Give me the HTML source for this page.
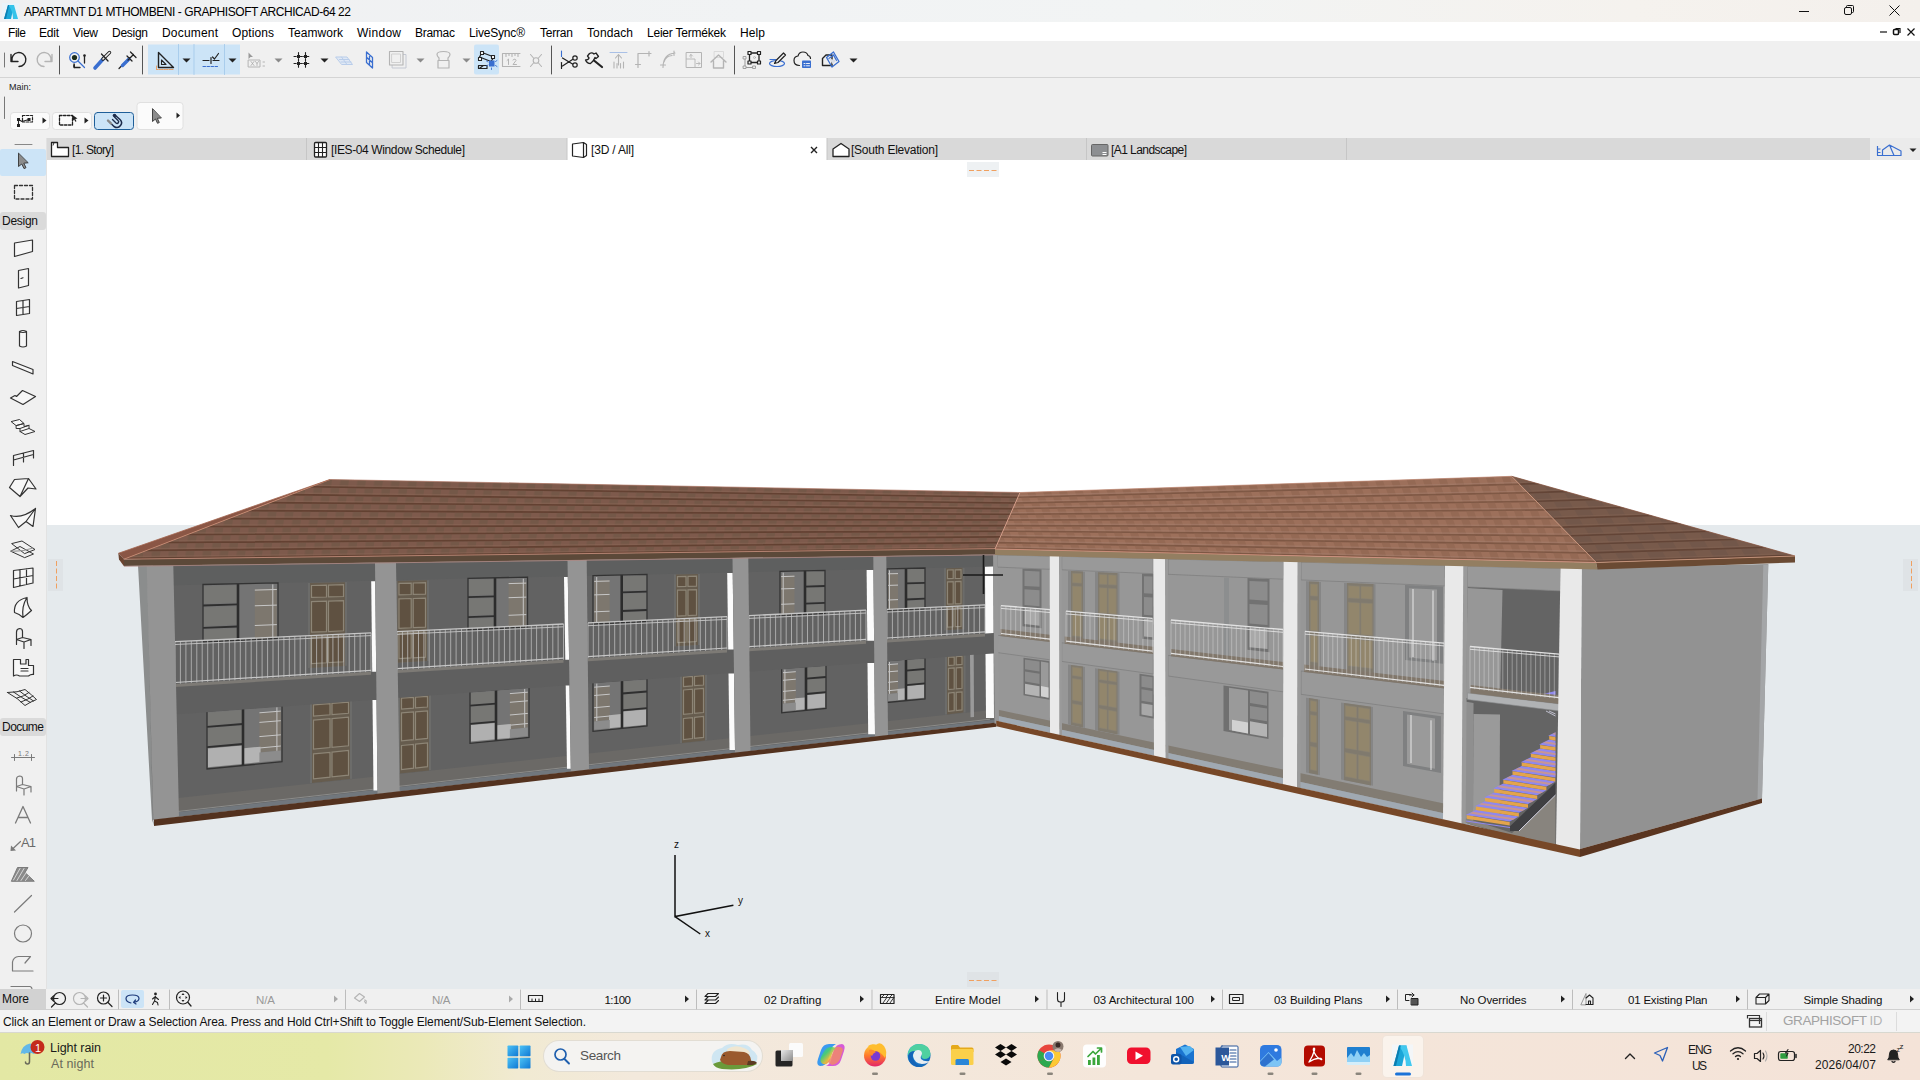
<!DOCTYPE html>
<html><head><meta charset="utf-8"><title>ARCHICAD</title>
<style>
html,body{margin:0;padding:0;background:#fff;}
body{width:1920px;height:1080px;position:relative;overflow:hidden;font-family:"Liberation Sans",sans-serif;}
.t{position:absolute;white-space:nowrap;}
.a{position:absolute;}
#titlebar{position:absolute;left:0;top:0;width:1920px;height:22px;background:linear-gradient(90deg,#eff0f2 0%,#f1f3f4 40%,#f2f4f4 60%,#f5f2ee 85%,#f4f0ec 100%);}
#menubar{position:absolute;left:0;top:22px;width:1920px;height:19px;background:#fff;}
#toolbar{position:absolute;left:0;top:41px;width:1920px;height:36px;background:#f0f0f0;border-bottom:1px solid #d4d4d4;}
#infobox{position:absolute;left:0;top:78px;width:1920px;height:60px;background:#f0f0f0;}
#tabbar{position:absolute;left:47px;top:138px;width:1873px;height:22px;background:#d9d9d9;}
#toolbox{position:absolute;left:0;top:138px;width:46px;height:851px;background:#f0f0f0;border-right:1px solid #e2e2e2;}
#quickbar{position:absolute;left:0;top:989px;width:1920px;height:20px;background:#f0f0f0;border-bottom:1px solid #d0d0d0;}
#statusbar{position:absolute;left:0;top:1010px;width:1920px;height:22px;background:#f3f3f3;}
#taskbar{position:absolute;left:0;top:1032px;width:1920px;height:48px;background:linear-gradient(90deg,#e3e8a4 0%,#e5e9a7 17%,#ebe9b8 22%,#f1ead2 27%,#f3e9dc 33%,#f4e6da 60%,#f4e3d8 100%);border-top:1px solid #d8d8d0;box-sizing:border-box;}
#view{position:absolute;left:47px;top:161px;width:1873px;height:828px;background:#fff;overflow:hidden;}
</style></head>
<body>
<div id="view"><svg width="1873" height="828" viewBox="47 161 1873 828" shape-rendering="auto">
<rect x="47" y="525" width="1873" height="470" fill="#e5eaed"/>
<polygon points="138,565.5 147,565.5 153.3,820 154,825.5 152,820" fill="#8b8d8d"/>
<polygon points="147,565.7 996,554.6 996,722.5 153,819.6" fill="#626262"/>
<polygon points="153,565.6 996,554.6 996,566.4 153,585.8" fill="#5e5f5f"/>
<polygon points="153,800.7 996,709.5 996,718.6 153,814.3" fill="#6b6966"/>
<line x1="160" y1="813.5" x2="990" y2="719.2" stroke="#8c8c8a" stroke-width="1"/>
<polygon points="153,815.1 996,719.4 996,722.5 153,819.6" fill="#71777d"/>
<polygon points="203,584.5 278,582.8 278,638.5 203,642" fill="#747474"/>
<polygon points="254.8,588.9 276.8,588.4 276.8,638.6 254.8,639.6" fill="#7d776e"/>
<path d="M254.8 590.1L276.8 589.5M254.8 605.8L276.8 605.1M254.8 625.5L276.8 624.6M272.8 584.4V638.8" stroke="#c6c6c6" stroke-width="1" fill="none"/>
<polygon points="204,586.2 237,585.4 237,602.4 204,603.4" fill="#777774"/>
<polygon points="204,607.5 237,606.4 237,624.6 204,625.9" fill="#777774"/>
<polygon points="204,629.9 237,628.5 237,640.4 204,642" fill="#777774"/>
<path d="M203 605.5L238 604.4M203 627.9L238 626.5" stroke="#2f2f2f" stroke-width="1.800" fill="none"/>
<line x1="238" y1="583.7" x2="238" y2="640.4" stroke="#2c2c2c" stroke-width="2.6"/>
<polygon points="203,584.5 278,582.8 278,638.5 203,642" fill="none" stroke="#333333" stroke-width="1.300"/>
<polygon points="308,583 347,582.1 347,665.8 308,668.1" fill="#6c6c6a"/>
<polygon points="310,583 345,582.2 345,665.9 310,668" fill="#665c4e"/>
<polygon points="311.5,585.5 326.5,585.1 326.5,597 311.5,597.4" fill="#5f5141" stroke="#8d8576" stroke-width="1.200"/>
<polygon points="311.5,601.7 326.5,601.2 326.5,631.6 311.5,632.2" fill="#5f5141" stroke="#8d8576" stroke-width="1.200"/>
<polygon points="311.5,637.3 326.5,636.6 326.5,662.8 311.5,663.7" fill="#5f5141" stroke="#8d8576" stroke-width="1.200"/>
<polygon points="328.5,585.1 343.5,584.7 343.5,596.5 328.5,596.9" fill="#5f5141" stroke="#8d8576" stroke-width="1.200"/>
<polygon points="328.5,601.1 343.5,600.7 343.5,630.8 328.5,631.5" fill="#5f5141" stroke="#8d8576" stroke-width="1.200"/>
<polygon points="328.5,636.5 343.5,635.8 343.5,661.8 328.5,662.7" fill="#5f5141" stroke="#8d8576" stroke-width="1.200"/>
<polygon points="207,711 282,705.4 282,761.7 207,769" fill="#747474"/>
<polygon points="259.4,712.8 280.8,711.1 280.8,750.5 259.4,752.5" fill="#7d776e"/>
<path d="M259.4 712.8L280.8 711.1M259.4 722.4L280.8 720.7M259.4 736.6L280.8 734.8M259.4 748L280.8 746M276.9 707.3V750.9" stroke="#c6c6c6" stroke-width="1" fill="none"/>
<polygon points="244,748.2 260.6,746.7 260.6,762.1 244,763.7" fill="#b4b4b4"/>
<polygon points="259.4,752.5 280.8,750.5 280.8,760.1 259.4,762.2" fill="#8c8c8c"/>
<polygon points="208,712.7 242,710.1 242,722.7 208,725.4" fill="#777774"/>
<polygon points="208,728.3 242,725.6 242,742.7 208,745.7" fill="#777774"/>
<polygon points="208,748.6 242,745.6 242,763.9 208,767.2" fill="#b0b0b0"/>
<path d="M207 726.9L243 724M207 747.2L243 744" stroke="#2f2f2f" stroke-width="1.800" fill="none"/>
<line x1="243" y1="708.3" x2="243" y2="765.5" stroke="#2c2c2c" stroke-width="2.6"/>
<polygon points="207,711 282,705.4 282,761.7 207,769" fill="none" stroke="#333333" stroke-width="1.300"/>
<polygon points="310,702.6 352,699.5 352,778.7 310,783.2" fill="#6c6c6a"/>
<polygon points="312,702.5 350,699.7 350,778.9 312,783" fill="#665c4e"/>
<polygon points="313.5,704.8 330,703.6 330,714.8 313.5,716.1" fill="#5f5141" stroke="#8d8576" stroke-width="1.200"/>
<polygon points="313.5,720.1 330,718.7 330,747.5 313.5,749" fill="#5f5141" stroke="#8d8576" stroke-width="1.200"/>
<polygon points="313.5,753.9 330,752.3 330,777.1 313.5,778.8" fill="#5f5141" stroke="#8d8576" stroke-width="1.200"/>
<polygon points="332,703.4 348.5,702.2 348.5,713.3 332,714.6" fill="#5f5141" stroke="#8d8576" stroke-width="1.200"/>
<polygon points="332,718.6 348.5,717.2 348.5,745.8 332,747.3" fill="#5f5141" stroke="#8d8576" stroke-width="1.200"/>
<polygon points="332,752.1 348.5,750.5 348.5,775.1 332,776.8" fill="#5f5141" stroke="#8d8576" stroke-width="1.200"/>
<polygon points="395.5,581 429,580.2 429,660.9 395.5,662.9" fill="#6c6c6a"/>
<polygon points="397.5,581 427,580.3 427,661.1 397.5,662.8" fill="#665c4e"/>
<polygon points="399,583.4 411.2,583.1 411.2,594.5 399,594.8" fill="#5f5141" stroke="#8d8576" stroke-width="1.200"/>
<polygon points="399,598.9 411.2,598.5 411.2,627.8 399,628.4" fill="#5f5141" stroke="#8d8576" stroke-width="1.200"/>
<polygon points="399,633.3 411.2,632.7 411.2,657.9 399,658.6" fill="#5f5141" stroke="#8d8576" stroke-width="1.200"/>
<polygon points="413.2,583 425.5,582.7 425.5,594.1 413.2,594.4" fill="#5f5141" stroke="#8d8576" stroke-width="1.200"/>
<polygon points="413.2,598.5 425.5,598.1 425.5,627.2 413.2,627.7" fill="#5f5141" stroke="#8d8576" stroke-width="1.200"/>
<polygon points="413.2,632.6 425.5,632.1 425.5,657.1 413.2,657.8" fill="#5f5141" stroke="#8d8576" stroke-width="1.200"/>
<polygon points="468,578.4 527.5,577.1 527.5,627 468,629.8" fill="#747474"/>
<polygon points="508.6,582.5 526.3,582.1 526.3,627.1 508.6,627.9" fill="#7d776e"/>
<path d="M508.6 583.6L526.3 583.1M508.6 597.7L526.3 597.1M508.6 615.3L526.3 614.6M523.3 578.7V627.2" stroke="#c6c6c6" stroke-width="1" fill="none"/>
<polygon points="469,580 494,579.4 494,594.6 469,595.3" fill="#777774"/>
<polygon points="469,598.9 494,598.1 494,614.4 469,615.4" fill="#777774"/>
<polygon points="469,618.9 494,617.9 494,628.6 469,629.7" fill="#777774"/>
<path d="M468 597.2L495 596.3M468 617.2L495 616.1" stroke="#2f2f2f" stroke-width="1.800" fill="none"/>
<line x1="495" y1="577.8" x2="495" y2="628.5" stroke="#2c2c2c" stroke-width="2.6"/>
<polygon points="468,578.4 527.5,577.1 527.5,627 468,629.8" fill="none" stroke="#333333" stroke-width="1.300"/>
<polygon points="398,696.1 431,693.7 431,770.1 398,773.7" fill="#6c6c6a"/>
<polygon points="400,696 429,693.9 429,770.4 400,773.5" fill="#665c4e"/>
<polygon points="401.5,698.2 413.5,697.3 413.5,708.1 401.5,709.1" fill="#5f5141" stroke="#8d8576" stroke-width="1.200"/>
<polygon points="401.5,712.9 413.5,711.9 413.5,739.7 401.5,740.8" fill="#5f5141" stroke="#8d8576" stroke-width="1.200"/>
<polygon points="401.5,745.5 413.5,744.3 413.5,768.2 401.5,769.5" fill="#5f5141" stroke="#8d8576" stroke-width="1.200"/>
<polygon points="415.5,697.2 427.5,696.3 427.5,707 415.5,707.9" fill="#5f5141" stroke="#8d8576" stroke-width="1.200"/>
<polygon points="415.5,711.8 427.5,710.8 427.5,738.4 415.5,739.5" fill="#5f5141" stroke="#8d8576" stroke-width="1.200"/>
<polygon points="415.5,744.1 427.5,743 427.5,766.7 415.5,768" fill="#5f5141" stroke="#8d8576" stroke-width="1.200"/>
<polygon points="470,691.5 529,687.1 529,737.5 470,743.3" fill="#747474"/>
<polygon points="509.9,693.6 527.8,692.2 527.8,727.6 509.9,729.2" fill="#7d776e"/>
<path d="M509.9 693.6L527.8 692.2M509.9 702.3L527.8 700.8M509.9 715L527.8 713.4M509.9 725.2L527.8 723.5M524.7 688.9V727.8" stroke="#c6c6c6" stroke-width="1" fill="none"/>
<polygon points="497,725.3 510.9,724 510.9,737.8 497,739.1" fill="#b4b4b4"/>
<polygon points="509.9,729.2 527.8,727.6 527.8,736.1 509.9,737.9" fill="#8c8c8c"/>
<polygon points="471,693 495,691.2 495,702.4 471,704.4" fill="#777774"/>
<polygon points="471,706.9 495,705 495,720.4 471,722.5" fill="#777774"/>
<polygon points="471,725.1 495,722.9 495,739.3 471,741.6" fill="#b0b0b0"/>
<path d="M470 705.7L496 703.6M470 723.9L496 721.6" stroke="#2f2f2f" stroke-width="1.800" fill="none"/>
<line x1="496" y1="689.6" x2="496" y2="740.8" stroke="#2c2c2c" stroke-width="2.6"/>
<polygon points="470,691.5 529,687.1 529,737.5 470,743.3" fill="none" stroke="#333333" stroke-width="1.300"/>
<polygon points="593,575.6 647,574.3 647,621.5 593,624" fill="#747474"/>
<polygon points="594.2,580.4 609.6,580 609.6,623.2 594.2,623.9" fill="#7d776e"/>
<path d="M594.2 581.4L609.6 581M594.2 594.9L609.6 594.4M594.2 611.8L609.6 611.2M596.7 577V623.8" stroke="#c6c6c6" stroke-width="1" fill="none"/>
<polygon points="622.7,576.3 646,575.8 646,589.9 622.7,590.7" fill="#777774"/>
<polygon points="622.7,594 646,593.2 646,608.3 622.7,609.3" fill="#777774"/>
<polygon points="622.7,612.6 646,611.6 646,621.6 622.7,622.6" fill="#777774"/>
<path d="M621.7 592.4L647 591.6M621.7 611L647 610" stroke="#2f2f2f" stroke-width="1.800" fill="none"/>
<line x1="621.7" y1="574.9" x2="621.7" y2="622.7" stroke="#2c2c2c" stroke-width="2.6"/>
<polygon points="593,575.6 647,574.3 647,621.5 593,624" fill="none" stroke="#333333" stroke-width="1.300"/>
<polygon points="674,574.5 700,573.9 700,644.9 674,646.4" fill="#6c6c6a"/>
<polygon points="676,574.5 698,574 698,645 676,646.3" fill="#665c4e"/>
<polygon points="677.5,576.6 686,576.4 686,586.4 677.5,586.6" fill="#5f5141" stroke="#8d8576" stroke-width="1.200"/>
<polygon points="677.5,590.2 686,590 686,615.7 677.5,616.1" fill="#5f5141" stroke="#8d8576" stroke-width="1.200"/>
<polygon points="677.5,620.4 686,620 686,642.1 677.5,642.6" fill="#5f5141" stroke="#8d8576" stroke-width="1.200"/>
<polygon points="688,576.3 696.5,576.1 696.5,586.1 688,586.3" fill="#5f5141" stroke="#8d8576" stroke-width="1.200"/>
<polygon points="688,589.9 696.5,589.6 696.5,615.2 688,615.6" fill="#5f5141" stroke="#8d8576" stroke-width="1.200"/>
<polygon points="688,619.9 696.5,619.5 696.5,641.5 688,642" fill="#5f5141" stroke="#8d8576" stroke-width="1.200"/>
<polygon points="593,682.4 647,678.3 647,726 593,731.3" fill="#747474"/>
<polygon points="594.2,687.2 609.8,686 609.8,719.9 594.2,721.4" fill="#7d776e"/>
<path d="M594.2 687.2L609.8 686M594.2 695.5L609.8 694.2M594.2 707.7L609.8 706.3M594.2 717.5L609.8 716M596.8 683.6V721.1" stroke="#c6c6c6" stroke-width="1" fill="none"/>
<polygon points="609,715.2 621,714.1 621,727.1 609,728.3" fill="#b4b4b4"/>
<polygon points="594.2,721.4 609.8,719.9 609.8,728.2 594.2,729.7" fill="#8c8c8c"/>
<polygon points="623,681.6 646,679.9 646,690.3 623,692.2" fill="#777774"/>
<polygon points="623,694.6 646,692.7 646,707 623,709.1" fill="#777774"/>
<polygon points="623,711.5 646,709.4 646,724.7 623,726.9" fill="#b0b0b0"/>
<path d="M622 693.5L647 691.5M622 710.4L647 708.1" stroke="#2f2f2f" stroke-width="1.800" fill="none"/>
<line x1="622" y1="680.2" x2="622" y2="728.4" stroke="#2c2c2c" stroke-width="2.6"/>
<polygon points="593,682.4 647,678.3 647,726 593,731.3" fill="none" stroke="#333333" stroke-width="1.300"/>
<polygon points="680,675.3 707,673.3 707,740.3 680,743.3" fill="#6c6c6a"/>
<polygon points="682,675.2 705,673.5 705,740.6 682,743" fill="#665c4e"/>
<polygon points="683.5,677.1 692.5,676.4 692.5,685.9 683.5,686.6" fill="#5f5141" stroke="#8d8576" stroke-width="1.200"/>
<polygon points="683.5,690 692.5,689.2 692.5,713.5 683.5,714.4" fill="#5f5141" stroke="#8d8576" stroke-width="1.200"/>
<polygon points="683.5,718.5 692.5,717.6 692.5,738.5 683.5,739.5" fill="#5f5141" stroke="#8d8576" stroke-width="1.200"/>
<polygon points="694.5,676.3 703.5,675.6 703.5,685 694.5,685.7" fill="#5f5141" stroke="#8d8576" stroke-width="1.200"/>
<polygon points="694.5,689.1 703.5,688.3 703.5,712.5 694.5,713.4" fill="#5f5141" stroke="#8d8576" stroke-width="1.200"/>
<polygon points="694.5,717.4 703.5,716.5 703.5,737.4 694.5,738.3" fill="#5f5141" stroke="#8d8576" stroke-width="1.200"/>
<polygon points="780,571.3 825,570.3 825,613.3 780,615.4" fill="#747474"/>
<polygon points="781.2,575.7 794.5,575.3 794.5,614.7 781.2,615.3" fill="#7d776e"/>
<path d="M781.2 576.6L794.5 576.2M781.2 588.9L794.5 588.5M781.2 604.3L794.5 603.8M783.2 572.7V615.2" stroke="#c6c6c6" stroke-width="1" fill="none"/>
<polygon points="806,572 824,571.6 824,584.5 806,585" fill="#777774"/>
<polygon points="806,588.1 824,587.5 824,601.3 806,602" fill="#777774"/>
<polygon points="806,605 824,604.3 824,613.3 806,614.2" fill="#777774"/>
<path d="M805 586.6L825 586M805 603.6L825 602.8" stroke="#2f2f2f" stroke-width="1.800" fill="none"/>
<line x1="805" y1="570.7" x2="805" y2="614.2" stroke="#2c2c2c" stroke-width="2.6"/>
<polygon points="780,571.3 825,570.3 825,613.3 780,615.4" fill="none" stroke="#333333" stroke-width="1.300"/>
<polygon points="781.7,668.4 826,665.1 826,708.5 781.7,712.8" fill="#747474"/>
<polygon points="782.9,672.7 795.8,671.7 795.8,702.6 782.9,703.8" fill="#7d776e"/>
<path d="M782.9 672.7L795.8 671.7M782.9 680.3L795.8 679.2M782.9 691.4L795.8 690.3M782.9 700.3L795.8 699.1M784.9 669.6V703.6" stroke="#c6c6c6" stroke-width="1" fill="none"/>
<polygon points="795.1,698.3 805,697.4 805,709.2 795.1,710.2" fill="#b4b4b4"/>
<polygon points="782.9,703.8 795.8,702.6 795.8,710.1 782.9,711.4" fill="#8c8c8c"/>
<polygon points="807,667.8 825,666.4 825,676 807,677.4" fill="#777774"/>
<polygon points="807,679.6 825,678.2 825,691.2 807,692.8" fill="#777774"/>
<polygon points="807,695 825,693.4 825,707.3 807,709" fill="#b0b0b0"/>
<path d="M806 678.6L826 677M806 694L826 692.2" stroke="#2f2f2f" stroke-width="1.800" fill="none"/>
<line x1="806" y1="666.5" x2="806" y2="710.5" stroke="#2c2c2c" stroke-width="2.6"/>
<polygon points="781.7,668.4 826,665.1 826,708.5 781.7,712.8" fill="none" stroke="#333333" stroke-width="1.300"/>
<polygon points="887,568.9 925,568 925,608.7 887,610.4" fill="#747474"/>
<polygon points="888.2,573 898,572.7 898,609.9 888.2,610.4" fill="#7d776e"/>
<path d="M888.2 573.8L898 573.6M888.2 585.4L898 585.1M888.2 600L898 599.6M889.5 570.3V610.3" stroke="#c6c6c6" stroke-width="1" fill="none"/>
<polygon points="907,569.6 924,569.2 924,581.4 907,582" fill="#777774"/>
<polygon points="907,584.8 924,584.3 924,597.3 907,598" fill="#777774"/>
<polygon points="907,600.9 924,600.2 924,608.7 907,609.5" fill="#777774"/>
<path d="M906 583.4L925 582.8M906 599.5L925 598.7" stroke="#2f2f2f" stroke-width="1.800" fill="none"/>
<line x1="906" y1="568.4" x2="906" y2="609.6" stroke="#2c2c2c" stroke-width="2.6"/>
<polygon points="887,568.9 925,568 925,608.7 887,610.4" fill="none" stroke="#333333" stroke-width="1.300"/>
<polygon points="944,568.2 964.5,567.8 964.5,629.2 944,630.4" fill="#6c6c6a"/>
<polygon points="946,568.2 962.5,567.8 962.5,629.3 946,630.3" fill="#665c4e"/>
<polygon points="947.5,570 953.2,569.9 953.2,578.5 947.5,578.7" fill="#5f5141" stroke="#8d8576" stroke-width="1.200"/>
<polygon points="947.5,581.8 953.2,581.6 953.2,603.9 947.5,604.2" fill="#5f5141" stroke="#8d8576" stroke-width="1.200"/>
<polygon points="947.5,607.9 953.2,607.6 953.2,626.8 947.5,627.1" fill="#5f5141" stroke="#8d8576" stroke-width="1.200"/>
<polygon points="955.2,569.8 961,569.7 961,578.3 955.2,578.5" fill="#5f5141" stroke="#8d8576" stroke-width="1.200"/>
<polygon points="955.2,581.6 961,581.4 961,603.6 955.2,603.8" fill="#5f5141" stroke="#8d8576" stroke-width="1.200"/>
<polygon points="955.2,607.5 961,607.3 961,626.4 955.2,626.7" fill="#5f5141" stroke="#8d8576" stroke-width="1.200"/>
<polygon points="887,660.5 925,657.7 925,698.8 887,702.5" fill="#747474"/>
<polygon points="888.2,664.6 898,663.9 898,693.1 888.2,694" fill="#7d776e"/>
<path d="M888.2 664.6L898 663.9M888.2 671.8L898 671M888.2 682.3L898 681.4M888.2 690.7L898 689.8M889.5 661.9V693.9" stroke="#c6c6c6" stroke-width="1" fill="none"/>
<polygon points="897.5,689 905,688.3 905,699.5 897.5,700.3" fill="#b4b4b4"/>
<polygon points="888.2,694 898,693.1 898,700.2 888.2,701.2" fill="#8c8c8c"/>
<polygon points="907,660.3 924,659 924,668.1 907,669.4" fill="#777774"/>
<polygon points="907,671.5 924,670.1 924,682.5 907,684" fill="#777774"/>
<polygon points="907,686.1 924,684.5 924,697.7 907,699.3" fill="#b0b0b0"/>
<path d="M906 670.6L925 669M906 685.1L925 683.4" stroke="#2f2f2f" stroke-width="1.800" fill="none"/>
<line x1="906" y1="659.1" x2="906" y2="700.7" stroke="#2c2c2c" stroke-width="2.6"/>
<polygon points="887,660.5 925,657.7 925,698.8 887,702.5" fill="none" stroke="#333333" stroke-width="1.300"/>
<polygon points="945,655.7 965.5,654.2 965.5,712.4 945,714.6" fill="#6c6c6a"/>
<polygon points="947,655.6 963.5,654.3 963.5,712.6 947,714.4" fill="#665c4e"/>
<polygon points="948.5,657.2 954.2,656.8 954.2,665 948.5,665.5" fill="#5f5141" stroke="#8d8576" stroke-width="1.200"/>
<polygon points="948.5,668.4 954.2,667.9 954.2,689 948.5,689.6" fill="#5f5141" stroke="#8d8576" stroke-width="1.200"/>
<polygon points="948.5,693.1 954.2,692.5 954.2,710.7 948.5,711.3" fill="#5f5141" stroke="#8d8576" stroke-width="1.200"/>
<polygon points="956.2,656.6 962,656.2 962,664.4 956.2,664.8" fill="#5f5141" stroke="#8d8576" stroke-width="1.200"/>
<polygon points="956.2,667.8 962,667.3 962,688.3 956.2,688.8" fill="#5f5141" stroke="#8d8576" stroke-width="1.200"/>
<polygon points="956.2,692.3 962,691.8 962,709.9 956.2,710.5" fill="#5f5141" stroke="#8d8576" stroke-width="1.200"/>
<polygon points="155,685.2 996,632.7 996,653.3 155,716.1" fill="#5f5f5f"/>
<polygon points="175,684 371,671.8 371,674.8 175,687" fill="#7d7a75"/>
<path d="M175 641.7V684M180.4 641.5V683.7M185.9 641.2V683.3M191.3 641V683M196.8 640.7V682.6M202.2 640.5V682.3M207.7 640.2V682M213.1 640V681.6M218.6 639.7V681.3M224 639.5V680.9M229.4 639.2V680.6M234.9 639V680.3M240.3 638.7V679.9M245.8 638.5V679.6M251.2 638.2V679.2M256.7 638V678.9M262.1 637.7V678.6M267.6 637.5V678.2M273 637.2V677.9M278.4 637V677.5M283.9 636.7V677.2M289.3 636.5V676.9M294.8 636.2V676.5M300.2 636V676.2M305.7 635.8V675.8M311.1 635.5V675.5M316.6 635.3V675.2M322 635V674.8M327.4 634.8V674.5M332.9 634.5V674.1M338.3 634.3V673.8M343.8 634V673.5M349.2 633.8V673.1M354.7 633.5V672.8M360.1 633.3V672.4M365.6 633V672.1M371 632.8V671.8" stroke="#c6c6c6" stroke-width="0.8" fill="none" opacity="0.9"/>
<line x1="175" y1="641.7" x2="371" y2="632.8" stroke="#c6c6c6" stroke-width="1.3"/>
<line x1="175" y1="644.5" x2="371" y2="635.6" stroke="#c6c6c6" stroke-width="0.9"/>
<line x1="175" y1="682.5" x2="371" y2="670.3" stroke="#c6c6c6" stroke-width="1.2"/>
<polygon points="397,670.1 563.5,659.7 563.5,662.7 397,673.1" fill="#7d7a75"/>
<path d="M397 631.6V670.1M402.4 631.4V669.8M407.7 631.1V669.5M413.1 630.9V669.1M418.5 630.6V668.8M423.9 630.4V668.5M429.2 630.1V668.1M434.6 629.9V667.8M440 629.6V667.5M445.3 629.4V667.1M450.7 629.2V666.8M456.1 628.9V666.4M461.5 628.7V666.1M466.8 628.4V665.8M472.2 628.2V665.4M477.6 627.9V665.1M482.9 627.7V664.8M488.3 627.4V664.4M493.7 627.2V664.1M499 627V663.8M504.4 626.7V663.4M509.8 626.5V663.1M515.2 626.2V662.8M520.5 626V662.4M525.9 625.7V662.1M531.3 625.5V661.8M536.6 625.2V661.4M542 625V661.1M547.4 624.8V660.7M552.8 624.5V660.4M558.1 624.3V660.1M563.5 624V659.7" stroke="#c6c6c6" stroke-width="0.8" fill="none" opacity="0.9"/>
<line x1="397" y1="631.6" x2="563.5" y2="624" stroke="#c6c6c6" stroke-width="1.3"/>
<line x1="397" y1="634.4" x2="563.5" y2="626.8" stroke="#c6c6c6" stroke-width="0.9"/>
<line x1="397" y1="668.6" x2="563.5" y2="658.2" stroke="#c6c6c6" stroke-width="1.2"/>
<polygon points="588,658.2 727,649.5 727,652.5 588,661.2" fill="#7d7a75"/>
<path d="M588 622.9V658.2M593.3 622.7V657.9M598.7 622.4V657.5M604 622.2V657.2M609.4 621.9V656.9M614.7 621.7V656.5M620.1 621.4V656.2M625.4 621.2V655.9M630.8 621V655.5M636.1 620.7V655.2M641.5 620.5V654.9M646.8 620.2V654.5M652.2 620V654.2M657.5 619.7V653.9M662.8 619.5V653.5M668.2 619.3V653.2M673.5 619V652.9M678.9 618.8V652.5M684.2 618.5V652.2M689.6 618.3V651.9M694.9 618V651.5M700.3 617.8V651.2M705.6 617.5V650.9M711 617.3V650.5M716.3 617.1V650.2M721.7 616.8V649.9M727 616.6V649.5" stroke="#c6c6c6" stroke-width="0.8" fill="none" opacity="0.9"/>
<line x1="588" y1="622.9" x2="727" y2="616.6" stroke="#c6c6c6" stroke-width="1.3"/>
<line x1="588" y1="625.7" x2="727" y2="619.4" stroke="#c6c6c6" stroke-width="0.9"/>
<line x1="588" y1="656.7" x2="727" y2="648" stroke="#c6c6c6" stroke-width="1.2"/>
<polygon points="749,648.2 866,640.8 866,643.8 749,651.2" fill="#7d7a75"/>
<path d="M749 615.6V648.2M754.3 615.3V647.8M759.6 615.1V647.5M765 614.8V647.2M770.3 614.6V646.8M775.6 614.4V646.5M780.9 614.1V646.2M786.2 613.9V645.8M791.5 613.6V645.5M796.9 613.4V645.2M802.2 613.2V644.8M807.5 612.9V644.5M812.8 612.7V644.2M818.1 612.4V643.8M823.5 612.2V643.5M828.8 611.9V643.2M834.1 611.7V642.8M839.4 611.5V642.5M844.7 611.2V642.2M850 611V641.8M855.4 610.7V641.5M860.7 610.5V641.2M866 610.2V640.8" stroke="#c6c6c6" stroke-width="0.8" fill="none" opacity="0.9"/>
<line x1="749" y1="615.6" x2="866" y2="610.2" stroke="#c6c6c6" stroke-width="1.3"/>
<line x1="749" y1="618.4" x2="866" y2="613" stroke="#c6c6c6" stroke-width="0.9"/>
<line x1="749" y1="646.7" x2="866" y2="639.3" stroke="#c6c6c6" stroke-width="1.2"/>
<polygon points="887,639.5 985,633.4 985,636.4 887,642.5" fill="#7d7a75"/>
<path d="M887 609.3V639.5M892.4 609V639.2M897.9 608.8V638.9M903.3 608.5V638.5M908.8 608.3V638.2M914.2 608.1V637.8M919.7 607.8V637.5M925.1 607.6V637.2M930.6 607.3V636.8M936 607.1V636.5M941.4 606.8V636.1M946.9 606.6V635.8M952.3 606.3V635.5M957.8 606.1V635.1M963.2 605.8V634.8M968.7 605.6V634.4M974.1 605.3V634.1M979.6 605.1V633.8M985 604.8V633.4" stroke="#c6c6c6" stroke-width="0.8" fill="none" opacity="0.9"/>
<line x1="887" y1="609.3" x2="985" y2="604.8" stroke="#c6c6c6" stroke-width="1.3"/>
<line x1="887" y1="612.1" x2="985" y2="607.6" stroke="#c6c6c6" stroke-width="0.9"/>
<line x1="887" y1="638" x2="985" y2="631.9" stroke="#c6c6c6" stroke-width="1.2"/>
<polygon points="146.7,565.5 173.3,565.5 179,816.9 153.3,819.9" fill="#949494"/>
<polygon points="371.2,581.3 375.2,581.3 376.2,671.8 372.2,671.8" fill="#fbfbfb"/>
<polygon points="372.5,700 376.5,700 377.5,790.6 373.5,790.6" fill="#fbfbfb"/>
<polygon points="375,562.6 396,562.6 399.7,791.5 377.5,794.1" fill="#949494"/>
<polygon points="564,576.9 567.8,576.9 569.1,659.7 565.3,659.7" fill="#fbfbfb"/>
<polygon points="565.7,685.6 569.5,685.6 570.8,768.7 567,768.7" fill="#fbfbfb"/>
<polygon points="567.5,560.1 586.7,560.1 589,769.7 570.8,771.8" fill="#949494"/>
<polygon points="727.2,573.1 732.7,573.1 733.7,649.5 728.2,649.5" fill="#fbfbfb"/>
<polygon points="728.5,673.4 734,673.4 735,750.1 729.5,750.1" fill="#fbfbfb"/>
<polygon points="732.5,557.9 748.3,557.9 750.5,751.1 735,752.9" fill="#949494"/>
<polygon points="866.6,569.9 873.4,569.9 874.1,640.8 867.3,640.8" fill="#fbfbfb"/>
<polygon points="867.5,663 874.3,663 875,734.3 868.2,734.3" fill="#fbfbfb"/>
<polygon points="873.3,556.1 886.3,556.1 888,735.3 875,736.8" fill="#949494"/>
<polygon points="985,566.7 993.3,566.5 993.6,632.9 985.3,633.4" fill="#fbfbfb"/>
<polygon points="985.5,654.1 993.6,653.5 994,718 986,718" fill="#fbfbfb"/>
<polygon points="970,655 973.7,654.8 974,717 970.5,717.3" fill="#9a9a9a"/>
<polygon points="154,819.5 996.3,722.5 996.3,726.7 154,826" fill="#53321f"/>
<polygon points="1581.7,568.5 1768.3,564 1762,798.5 1580,849" fill="#929292"/>
<polygon points="1763.3,564.6 1768.3,564.5 1762,798.5 1757.5,799.8" fill="#a4a6a8"/>
<polygon points="1580,849 1762,798.5 1762,803 1580,857" fill="#5a3520"/>
<polygon points="993.3,554.8 1561,568.4 1556,844.2 996,720.7" fill="#979797"/>
<polygon points="996,709.3 1470,808.9 1470,818.9 996,715.4" fill="#827c73"/>
<polygon points="996,715.4 1470,818.9 1470,825.2 996,720.7" fill="#a0a9b2"/>
<polygon points="1467.5,586 1561,591 1557,850 1463,822" fill="#646464"/>
<polygon points="1467.5,588 1502.5,590 1500,700 1466,698" fill="#979797"/>
<polygon points="1462,701 1473.5,703 1473,823 1461.5,822" fill="#8f8f8f"/>
<polygon points="1473.5,714 1500,714.5 1499.5,815 1473,815" fill="#9a9a9a"/>
<polygon points="1512,833 1555.5,795 1555.5,848 1463,822 1466,818" fill="#88847e"/>
<polygon points="1510,826.5 1509.7,826.6 1518.9,817.8 1518.9,817.8 1528,809 1528,809 1537.2,800.2 1537.2,800.2 1546.4,791.4 1546.4,791.4 1555.5,782.6 1555.5,782.6 1555.5,773.8 1555.5,786 1555.5,795 1519,831 1510,831" fill="#3f3f42"/>
<line x1="1519" y1="831" x2="1555.5" y2="795" stroke="#d4d4e4" stroke-width="1"/>
<clipPath id="cst"><rect x="1460" y="690" width="95.5" height="170"/></clipPath><g clip-path="url(#cst)">
<polygon points="1465.7,815 1509.7,821.6 1518.9,816.6 1475.9,810" fill="#9088ee"/>
<polygon points="1469.7,813.4 1512.7,820 1515.7,818.4 1472.7,811.8" fill="#d89a78" opacity="0.750"/>
<polygon points="1466.7,815.3 1509.7,821.9 1509.7,825.4 1466.7,818.8" fill="#e3a44c"/>
<polygon points="1474.9,806.2 1518.9,812.8 1528,807.8 1485,801.2" fill="#9088ee"/>
<polygon points="1478.9,804.6 1521.9,811.2 1524.9,809.6 1481.9,803" fill="#d89a78" opacity="0.750"/>
<polygon points="1475.9,806.5 1518.9,813.1 1518.9,816.6 1475.9,810" fill="#e3a44c"/>
<polygon points="1484,797.4 1528,804 1537.2,799 1494.2,792.4" fill="#9088ee"/>
<polygon points="1488,795.8 1531,802.4 1534,800.8 1491,794.2" fill="#d89a78" opacity="0.750"/>
<polygon points="1485,797.7 1528,804.3 1528,807.8 1485,801.2" fill="#e3a44c"/>
<polygon points="1493.2,788.6 1537.2,795.2 1546.4,790.2 1503.4,783.6" fill="#9088ee"/>
<polygon points="1497.2,787 1540.2,793.6 1543.2,792 1500.2,785.4" fill="#d89a78" opacity="0.750"/>
<polygon points="1494.2,788.9 1537.2,795.5 1537.2,799 1494.2,792.4" fill="#e3a44c"/>
<polygon points="1502.4,779.8 1546.4,786.4 1555.6,781.4 1512.6,774.8" fill="#9088ee"/>
<polygon points="1506.4,778.2 1549.4,784.8 1552.4,783.2 1509.4,776.6" fill="#d89a78" opacity="0.750"/>
<polygon points="1503.4,780.1 1546.4,786.7 1546.4,790.2 1503.4,783.6" fill="#e3a44c"/>
<polygon points="1511.5,771 1555.5,777.6 1564.7,772.6 1521.7,766" fill="#9088ee"/>
<polygon points="1515.5,769.4 1558.5,776 1561.5,774.4 1518.5,767.8" fill="#d89a78" opacity="0.750"/>
<polygon points="1512.5,771.3 1555.5,777.9 1555.5,781.4 1512.5,774.8" fill="#e3a44c"/>
<polygon points="1520.7,762.2 1564.7,768.8 1573.9,763.8 1530.9,757.2" fill="#9088ee"/>
<polygon points="1524.7,760.6 1567.7,767.2 1570.7,765.6 1527.7,759" fill="#d89a78" opacity="0.750"/>
<polygon points="1521.7,762.5 1564.7,769.1 1564.7,772.6 1521.7,766" fill="#e3a44c"/>
<polygon points="1529.9,753.4 1573.9,760 1583.1,755 1540.1,748.4" fill="#9088ee"/>
<polygon points="1533.9,751.8 1576.9,758.4 1579.9,756.8 1536.9,750.2" fill="#d89a78" opacity="0.750"/>
<polygon points="1530.9,753.7 1573.9,760.3 1573.9,763.8 1530.9,757.2" fill="#e3a44c"/>
<polygon points="1539.1,744.6 1583.1,751.2 1592.2,746.2 1549.2,739.6" fill="#9088ee"/>
<polygon points="1543.1,743 1586.1,749.6 1589.1,748 1546.1,741.4" fill="#d89a78" opacity="0.750"/>
<polygon points="1540.1,744.9 1583.1,751.5 1583.1,755 1540.1,748.4" fill="#e3a44c"/>
<polygon points="1548.2,735.8 1592.2,742.4 1601.4,737.4 1558.4,730.8" fill="#9088ee"/>
<polygon points="1552.2,734.2 1595.2,740.8 1598.2,739.2 1555.2,732.6" fill="#d89a78" opacity="0.750"/>
<polygon points="1549.2,736.1 1592.2,742.7 1592.2,746.2 1549.2,739.6" fill="#e3a44c"/>
</g>
<line x1="1466" y1="821" x2="1510" y2="827.5" stroke="#8f88ee" stroke-width="1.2"/>
<polygon points="1543,694 1555.5,691 1555.5,697.5 1546,699" fill="#8f88ee"/>
<line x1="1546" y1="711" x2="1555.5" y2="716" stroke="#c8c8d8" stroke-width="0.9"/>
<line x1="1549" y1="711" x2="1555.5" y2="714" stroke="#c8c8d8" stroke-width="0.9"/>
<polygon points="1022.5,568.4 1041.5,569.2 1041.5,628.2 1022.5,626.2" fill="#727272"/>
<polygon points="1024.5,570.8 1039.5,571.5 1039.5,586.8 1024.5,585.9" fill="#8c8c8c"/>
<polygon points="1024.5,589.3 1039.5,590.3 1039.5,606.2 1024.5,605" fill="#8c8c8c"/>
<polygon points="1024.5,608.5 1039.5,609.7 1039.5,625.7 1024.5,624.1" fill="#a8a8a8"/>
<polygon points="1023.5,657.7 1049.5,661.3 1049.5,699.8 1023.5,695.2" fill="#707070"/>
<polygon points="1041,661.6 1048.5,662.7 1048.5,697.7 1041,696.3" fill="#9a9a9a"/>
<polygon points="1041,686.1 1048.5,687.4 1048.5,697.7 1041,696.3" fill="#d2d2d2"/>
<polygon points="1025,659.4 1039.5,661.5 1039.5,671.4 1025,669.2" fill="#8c8c8c"/>
<polygon points="1025,671.4 1039.5,673.7 1039.5,683.9 1025,681.6" fill="#8c8c8c"/>
<polygon points="1025,683.8 1039.5,686.2 1039.5,696.5 1025,694" fill="#b4b4b4"/>
<polygon points="1068,571 1085,571.7 1085,640.5 1068,638.6" fill="#868686"/>
<polygon points="1071,571.1 1083,571.6 1083,640.2 1071,638.9" fill="#807a6e"/>
<polygon points="1072.5,573.2 1081.5,573.6 1081.5,583.2 1072.5,582.7" fill="#92866c" stroke="#8a8374" stroke-width="0.600"/>
<polygon points="1072.5,586.1 1081.5,586.6 1081.5,611.3 1072.5,610.5" fill="#92866c" stroke="#8a8374" stroke-width="0.600"/>
<polygon points="1072.5,614.6 1081.5,615.4 1081.5,636.6 1072.5,635.7" fill="#92866c" stroke="#8a8374" stroke-width="0.600"/>
<polygon points="1095,572.1 1119.5,573.2 1119.5,644.4 1095,641.6" fill="#868686"/>
<polygon points="1098,572.3 1117.5,573.1 1117.5,644.1 1098,641.9" fill="#807a6e"/>
<polygon points="1099.2,574.4 1107,574.7 1107,584.6 1099.2,584.2" fill="#92866c" stroke="#8a8374" stroke-width="0.600"/>
<polygon points="1099.2,587.7 1107,588.1 1107,613.4 1099.2,612.8" fill="#92866c" stroke="#8a8374" stroke-width="0.600"/>
<polygon points="1099.2,617 1107,617.6 1107,639.4 1099.2,638.6" fill="#92866c" stroke="#8a8374" stroke-width="0.600"/>
<polygon points="1108.5,574.8 1116.3,575.2 1116.3,585.1 1108.5,584.7" fill="#92866c" stroke="#8a8374" stroke-width="0.600"/>
<polygon points="1108.5,588.2 1116.3,588.7 1116.3,614.2 1108.5,613.5" fill="#92866c" stroke="#8a8374" stroke-width="0.600"/>
<polygon points="1108.5,617.8 1116.3,618.5 1116.3,640.5 1108.5,639.6" fill="#92866c" stroke="#8a8374" stroke-width="0.600"/>
<polygon points="1142,573.5 1154.5,574 1154.5,640.1 1142,638.8" fill="#727272"/>
<polygon points="1144,576.2 1152.5,576.5 1152.5,593.7 1144,593.2" fill="#8c8c8c"/>
<polygon points="1144,597.1 1152.5,597.6 1152.5,615.5 1144,614.8" fill="#8c8c8c"/>
<polygon points="1144,618.7 1152.5,619.4 1152.5,637.2 1144,636.4" fill="#a8a8a8"/>
<polygon points="1068,664.5 1085,666.9 1085,727.9 1068,724.5" fill="#868686"/>
<polygon points="1071,664.9 1083,666.6 1083,727.5 1071,725.1" fill="#807a6e"/>
<polygon points="1072.5,667 1081.5,668.2 1081.5,676.7 1072.5,675.4" fill="#92866c" stroke="#8a8374" stroke-width="0.600"/>
<polygon points="1072.5,678.4 1081.5,679.8 1081.5,701.7 1072.5,700.1" fill="#92866c" stroke="#8a8374" stroke-width="0.600"/>
<polygon points="1072.5,703.7 1081.5,705.3 1081.5,724.2 1072.5,722.4" fill="#92866c" stroke="#8a8374" stroke-width="0.600"/>
<polygon points="1095,668.3 1119.5,671.7 1119.5,734.8 1095,729.9" fill="#868686"/>
<polygon points="1098,668.7 1117.5,671.4 1117.5,734.4 1098,730.5" fill="#807a6e"/>
<polygon points="1099.2,670.7 1107,671.8 1107,680.6 1099.2,679.4" fill="#92866c" stroke="#8a8374" stroke-width="0.600"/>
<polygon points="1099.2,682.5 1107,683.7 1107,706.1 1099.2,704.8" fill="#92866c" stroke="#8a8374" stroke-width="0.600"/>
<polygon points="1099.2,708.5 1107,709.9 1107,729.2 1099.2,727.7" fill="#92866c" stroke="#8a8374" stroke-width="0.600"/>
<polygon points="1108.5,672 1116.3,673.1 1116.3,682 1108.5,680.8" fill="#92866c" stroke="#8a8374" stroke-width="0.600"/>
<polygon points="1108.5,683.9 1116.3,685.1 1116.3,707.8 1108.5,706.4" fill="#92866c" stroke="#8a8374" stroke-width="0.600"/>
<polygon points="1108.5,710.2 1116.3,711.5 1116.3,731.1 1108.5,729.5" fill="#92866c" stroke="#8a8374" stroke-width="0.600"/>
<polygon points="1139.5,673.8 1154.5,675.9 1154.5,718.7 1139.5,716" fill="#727272"/>
<polygon points="1141.5,675.8 1152.5,677.3 1152.5,688.4 1141.5,686.8" fill="#8c8c8c"/>
<polygon points="1141.5,689.3 1152.5,691 1152.5,702.5 1141.5,700.7" fill="#8c8c8c"/>
<polygon points="1141.5,703.2 1152.5,705.1 1152.5,716.6 1141.5,714.6" fill="#a8a8a8"/>
<polygon points="1224,577.7 1229,577.9 1229,656.7 1224,656.1" fill="#8c8e8f"/>
<polygon points="1247.5,577.9 1269.5,578.9 1269.5,652.2 1247.5,649.8" fill="#727272"/>
<polygon points="1249.5,580.9 1267.5,581.7 1267.5,600.7 1249.5,599.6" fill="#8c8c8c"/>
<polygon points="1249.5,604 1267.5,605.1 1267.5,624.9 1249.5,623.4" fill="#8c8c8c"/>
<polygon points="1249.5,627.7 1267.5,629.3 1267.5,649 1249.5,647.2" fill="#a8a8a8"/>
<polygon points="1223.5,685.5 1268.5,691.7 1268.5,739.1 1223.5,731" fill="#707070"/>
<polygon points="1229,687.7 1248,690.4 1248,733.4 1229,730" fill="#9a9a9a"/>
<polygon points="1232,719.7 1248,722.4 1248,733.4 1232,730.5" fill="#d2d2d2"/>
<polygon points="1250,691 1267,693.4 1267,705.7 1250,703.1" fill="#8c8c8c"/>
<polygon points="1250,705.9 1267,708.5 1267,721.3 1250,718.5" fill="#8c8c8c"/>
<polygon points="1250,721.3 1267,724.2 1267,736.9 1250,733.9" fill="#b4b4b4"/>
<polygon points="1306,581.2 1321,581.9 1321,667.1 1306,665.4" fill="#868686"/>
<polygon points="1309,581.4 1319,581.8 1319,666.8 1309,665.7" fill="#807a6e"/>
<polygon points="1310.5,584 1317.5,584.3 1317.5,596.2 1310.5,595.8" fill="#92866c" stroke="#8a8374" stroke-width="0.600"/>
<polygon points="1310.5,600 1317.5,600.4 1317.5,631 1310.5,630.4" fill="#92866c" stroke="#8a8374" stroke-width="0.600"/>
<polygon points="1310.5,635.5 1317.5,636.1 1317.5,662.4 1310.5,661.7" fill="#92866c" stroke="#8a8374" stroke-width="0.600"/>
<polygon points="1344,582.9 1375.5,584.2 1375.5,673.2 1344,669.7" fill="#868686"/>
<polygon points="1347,583 1373.5,584.1 1373.5,673 1347,670" fill="#807a6e"/>
<polygon points="1348.2,585.7 1359.5,586.2 1359.5,598.5 1348.2,597.9" fill="#92866c" stroke="#8a8374" stroke-width="0.600"/>
<polygon points="1348.2,602.2 1359.5,602.9 1359.5,634.5 1348.2,633.6" fill="#92866c" stroke="#8a8374" stroke-width="0.600"/>
<polygon points="1348.2,638.8 1359.5,639.8 1359.5,667 1348.2,665.8" fill="#92866c" stroke="#8a8374" stroke-width="0.600"/>
<polygon points="1361,586.2 1372.3,586.8 1372.3,599.2 1361,598.6" fill="#92866c" stroke="#8a8374" stroke-width="0.600"/>
<polygon points="1361,603 1372.3,603.6 1372.3,635.6 1361,634.6" fill="#92866c" stroke="#8a8374" stroke-width="0.600"/>
<polygon points="1361,639.9 1372.3,640.9 1372.3,668.4 1361,667.2" fill="#92866c" stroke="#8a8374" stroke-width="0.600"/>
<polygon points="1405,585 1443,586.6 1443,663.8 1405,660" fill="#7f8081"/>
<polygon points="1409,588.2 1437,589.4 1437,660.2 1409,657.4" fill="#9a9a9a"/>
<line x1="1413" y1="589" x2="1413" y2="657" stroke="#e8e8e8" stroke-width="1"/>
<line x1="1433" y1="590.6" x2="1433" y2="660.8" stroke="#e8e8e8" stroke-width="1"/>
<polygon points="1306,697.7 1320,699.7 1320,775.2 1306,772.4" fill="#868686"/>
<polygon points="1309,698.1 1318,699.4 1318,774.8 1309,773" fill="#807a6e"/>
<polygon points="1310.5,700.6 1316.5,701.4 1316.5,712 1310.5,711.1" fill="#92866c" stroke="#8a8374" stroke-width="0.600"/>
<polygon points="1310.5,714.8 1316.5,715.7 1316.5,742.8 1310.5,741.8" fill="#92866c" stroke="#8a8374" stroke-width="0.600"/>
<polygon points="1310.5,746.3 1316.5,747.4 1316.5,770.7 1310.5,769.5" fill="#92866c" stroke="#8a8374" stroke-width="0.600"/>
<polygon points="1341,702.6 1373,707 1373,785.8 1341,779.4" fill="#868686"/>
<polygon points="1344,703 1371,706.8 1371,785.4 1344,780" fill="#807a6e"/>
<polygon points="1345.2,705.5 1356.7,707.1 1356.7,718 1345.2,716.3" fill="#92866c" stroke="#8a8374" stroke-width="0.600"/>
<polygon points="1345.2,720.1 1356.7,721.9 1356.7,749.9 1345.2,747.9" fill="#92866c" stroke="#8a8374" stroke-width="0.600"/>
<polygon points="1345.2,752.5 1356.7,754.6 1356.7,778.7 1345.2,776.4" fill="#92866c" stroke="#8a8374" stroke-width="0.600"/>
<polygon points="1358.3,707.3 1369.8,709 1369.8,720 1358.3,718.2" fill="#92866c" stroke="#8a8374" stroke-width="0.600"/>
<polygon points="1358.3,722.1 1369.8,723.9 1369.8,752.2 1358.3,750.2" fill="#92866c" stroke="#8a8374" stroke-width="0.600"/>
<polygon points="1358.3,754.8 1369.8,756.9 1369.8,781.3 1358.3,779" fill="#92866c" stroke="#8a8374" stroke-width="0.600"/>
<polygon points="1403,711 1441,716.3 1441,772.9 1403,766" fill="#7f8081"/>
<polygon points="1407,714.6 1435,718.5 1435,768.8 1407,763.7" fill="#9a9a9a"/>
<line x1="1411" y1="715" x2="1411" y2="763" stroke="#e8e8e8" stroke-width="1"/>
<line x1="1431" y1="720.3" x2="1431" y2="769.9" stroke="#e8e8e8" stroke-width="1"/>
<polygon points="997.5,554.9 1050,556.1 1050,569.3 997.5,567.1" fill="#999999" stroke="#7d7d7d" stroke-width="0.700"/>
<polygon points="997.5,635.3 1050,641.4 1050,659.8 997.5,652.6" fill="#999999" stroke="#7d7d7d" stroke-width="0.700"/>
<polygon points="1000.5,628.9 1050,634.7 1050,641.9 1000.5,636.1" fill="#81776b"/>
<polygon points="1061.7,556.4 1153.3,558.6 1153.3,573.7 1061.7,569.8" fill="#999999" stroke="#7d7d7d" stroke-width="0.700"/>
<polygon points="1061.7,642.8 1153.3,653.6 1153.3,674 1061.7,661.4" fill="#999999" stroke="#7d7d7d" stroke-width="0.700"/>
<polygon points="1064.7,636.4 1153.3,646.8 1153.3,654.1 1064.7,643.7" fill="#81776b"/>
<polygon points="1168,559 1283.5,561.7 1283.5,579.2 1168,574.3" fill="#999999" stroke="#7d7d7d" stroke-width="0.700"/>
<polygon points="1168,655.4 1283.5,669 1283.5,691.9 1168,676" fill="#999999" stroke="#7d7d7d" stroke-width="0.700"/>
<polygon points="1171,648.9 1283.5,662 1283.5,669.5 1171,656.2" fill="#81776b"/>
<polygon points="1301,562.2 1445,565.6 1445,586 1301,579.9" fill="#999999" stroke="#7d7d7d" stroke-width="0.700"/>
<polygon points="1301,671 1445,688 1445,714 1301,694.3" fill="#999999" stroke="#7d7d7d" stroke-width="0.700"/>
<polygon points="1304,664.4 1445,680.9 1445,688.5 1304,671.9" fill="#81776b"/>
<polygon points="1467.5,566.2 1560.5,568.4 1560.5,590.9 1467.5,587" fill="#999999" stroke="#7d7d7d" stroke-width="0.700"/>
<polygon points="1467.5,692.9 1560.5,704.1 1560.5,711.1 1467.5,699.5" fill="#b0b2b4" stroke="#8b8d8f" stroke-width="0.600"/>
<polygon points="1470.5,685.1 1560.5,695.3 1560.5,704.1 1470.5,693.3" fill="#81776b"/>
<path d="M1001 605.6V635M1005.9 606V635.5M1010.8 606.4V636.1M1015.7 606.8V636.7M1020.6 607.3V637.2M1025.5 607.7V637.8M1030.4 608.1V638.4M1035.3 608.5V639M1040.2 608.9V639.5M1045.1 609.3V640.1M1050 609.7V640.7" stroke="#e2e2e2" stroke-width="0.7" fill="none" opacity="0.6"/>
<line x1="1001" y1="605.6" x2="1050" y2="609.7" stroke="#e2e2e2" stroke-width="1.3"/>
<line x1="1001" y1="608.4" x2="1050" y2="612.5" stroke="#e2e2e2" stroke-width="0.9"/>
<line x1="1001" y1="633.5" x2="1050" y2="639.2" stroke="#e2e2e2" stroke-width="1.2"/>
<path d="M1066 611.1V642.6M1070.8 611.5V643.1M1075.6 611.9V643.7M1080.4 612.3V644.3M1085.2 612.7V644.8M1090 613.1V645.4M1094.8 613.5V645.9M1099.6 613.9V646.5M1104.4 614.3V647.1M1109.2 614.8V647.6M1114.1 615.2V648.2M1118.9 615.6V648.8M1123.7 616V649.3M1128.5 616.4V649.9M1133.3 616.8V650.4M1138.1 617.2V651M1142.9 617.6V651.6M1147.7 618V652.1M1152.5 618.4V652.7" stroke="#e2e2e2" stroke-width="0.7" fill="none" opacity="0.6"/>
<line x1="1066" y1="611.1" x2="1152.5" y2="618.4" stroke="#e2e2e2" stroke-width="1.3"/>
<line x1="1066" y1="613.9" x2="1152.5" y2="621.2" stroke="#e2e2e2" stroke-width="0.9"/>
<line x1="1066" y1="641.1" x2="1152.5" y2="651.2" stroke="#e2e2e2" stroke-width="1.2"/>
<path d="M1171 620V654.9M1175.7 620.4V655.4M1180.3 620.8V655.9M1185 621.2V656.5M1189.7 621.6V657M1194.3 622V657.6M1199 622.3V658.1M1203.7 622.7V658.7M1208.3 623.1V659.2M1213 623.5V659.8M1217.7 623.9V660.3M1222.3 624.3V660.9M1227 624.7V661.4M1231.7 625.1V662M1236.3 625.5V662.5M1241 625.9V663.1M1245.7 626.3V663.6M1250.3 626.7V664.1M1255 627.1V664.7M1259.7 627.5V665.2M1264.3 627.9V665.8M1269 628.3V666.3M1273.7 628.7V666.9M1278.3 629.1V667.4M1283 629.5V668" stroke="#e2e2e2" stroke-width="0.7" fill="none" opacity="0.6"/>
<line x1="1171" y1="620" x2="1283" y2="629.5" stroke="#e2e2e2" stroke-width="1.3"/>
<line x1="1171" y1="622.8" x2="1283" y2="632.3" stroke="#e2e2e2" stroke-width="0.9"/>
<line x1="1171" y1="653.4" x2="1283" y2="666.5" stroke="#e2e2e2" stroke-width="1.2"/>
<path d="M1305 631.3V670.5M1309.6 631.7V671.1M1314.3 632.1V671.6M1318.9 632.5V672.2M1323.5 632.9V672.7M1328.2 633.3V673.3M1332.8 633.7V673.8M1337.4 634.1V674.3M1342.1 634.5V674.9M1346.7 634.8V675.4M1351.3 635.2V676M1356 635.6V676.5M1360.6 636V677.1M1365.2 636.4V677.6M1369.9 636.8V678.1M1374.5 637.2V678.7M1379.1 637.6V679.2M1383.8 638V679.8M1388.4 638.4V680.3M1393 638.8V680.9M1397.7 639.2V681.4M1402.3 639.6V681.9M1406.9 639.9V682.5M1411.6 640.3V683M1416.2 640.7V683.6M1420.8 641.1V684.1M1425.5 641.5V684.6M1430.1 641.9V685.2M1434.7 642.3V685.7M1439.4 642.7V686.3M1444 643.1V686.8" stroke="#e2e2e2" stroke-width="0.7" fill="none" opacity="0.6"/>
<line x1="1305" y1="631.3" x2="1444" y2="643.1" stroke="#e2e2e2" stroke-width="1.3"/>
<line x1="1305" y1="634.1" x2="1444" y2="645.9" stroke="#e2e2e2" stroke-width="0.9"/>
<line x1="1305" y1="669" x2="1444" y2="685.3" stroke="#e2e2e2" stroke-width="1.2"/>
<path d="M1470 646.5V688.8M1474.7 646.9V689.3M1479.4 647.3V689.9M1484.1 647.7V690.4M1488.7 648.1V690.9M1493.4 648.5V691.5M1498.1 648.9V692M1502.8 649.3V692.6M1507.5 649.7V693.1M1512.2 650.1V693.7M1516.8 650.5V694.2M1521.5 650.9V694.8M1526.2 651.3V695.3M1530.9 651.7V695.8M1535.6 652.1V696.4M1540.3 652.5V696.9M1544.9 652.9V697.5M1549.6 653.3V698M1554.3 653.7V698.6M1559 654.1V699.1" stroke="#e2e2e2" stroke-width="0.7" fill="none" opacity="0.6"/>
<line x1="1470" y1="646.5" x2="1559" y2="654.1" stroke="#e2e2e2" stroke-width="1.3"/>
<line x1="1470" y1="649.3" x2="1559" y2="656.9" stroke="#e2e2e2" stroke-width="0.9"/>
<line x1="1470" y1="687.3" x2="1559" y2="697.6" stroke="#e2e2e2" stroke-width="1.2"/>
<polygon points="993.3,554.8 997.5,554.9 999,724 994.5,723.5" fill="#989898"/>
<polygon points="1059,555.7 1061.7,556 1062,735.6 1059.3,735" fill="#9a9a9a"/>
<polygon points="1049.7,555.7 1059,555.7 1059.3,735 1050,732.9" fill="#e9e9e9"/>
<polygon points="1165,558.3 1168,558.6 1168.5,759.1 1165.5,758.4" fill="#9a9a9a"/>
<polygon points="1153.3,558.3 1165,558.3 1165.5,758.4 1154,755.9" fill="#e9e9e9"/>
<polygon points="1297.5,561.4 1301,561.7 1300.5,788.2 1297,787.4" fill="#9a9a9a"/>
<polygon points="1283.5,561.4 1297.5,561.4 1297,787.4 1283,784.3" fill="#e9e9e9"/>
<polygon points="1463.3,565.4 1467.5,565.7 1465.7,824.6 1461.5,823.7" fill="#9a9a9a"/>
<polygon points="1445,565.4 1463.3,565.4 1461.5,823.7 1443,819.6" fill="#e9e9e9"/>
<polygon points="1560.5,568.2 1581.7,568.2 1580,849.8 1556,844.5" fill="#e9e9e9"/>
<polygon points="996.3,720.8 1580,849.5 1580,857 996.3,726.3" fill="#774828"/>
<defs><pattern id="pl0" width="17" height="8" patternUnits="userSpaceOnUse" patternTransform="translate(0 0) skewX(-8)"><rect width="17" height="8" fill="#7e5a4c"/><rect x="8.5" width="8.5" height="8" fill="#745848"/></pattern><pattern id="pl1" width="17" height="8" patternUnits="userSpaceOnUse" patternTransform="translate(8.5 0) skewX(-8)"><rect width="17" height="8" fill="#7e5a4c"/><rect x="8.5" width="8.5" height="8" fill="#745848"/></pattern><pattern id="pr0" width="16" height="8" patternUnits="userSpaceOnUse" patternTransform="translate(0 0) skewX(20)"><rect width="16" height="8" fill="#9d705b"/><rect x="8" width="8" height="8" fill="#946954"/></pattern><pattern id="pr1" width="16" height="8" patternUnits="userSpaceOnUse" patternTransform="translate(8 0) skewX(20)"><rect width="16" height="8" fill="#9d705b"/><rect x="8" width="8" height="8" fill="#946954"/></pattern><pattern id="ph0" width="32" height="8" patternUnits="userSpaceOnUse" patternTransform="translate(0 0) skewX(30)"><rect width="32" height="8" fill="#785a4b"/><rect x="16" width="16" height="8" fill="#72574a"/></pattern><pattern id="ph1" width="32" height="8" patternUnits="userSpaceOnUse" patternTransform="translate(16 0) skewX(30)"><rect width="32" height="8" fill="#785a4b"/><rect x="16" width="16" height="8" fill="#72574a"/></pattern></defs>
<polygon points="124,559.2 330,479.5 1020,492.5 995,549" fill="#7a5a4b"/>
<clipPath id="cpl"><polygon points="124,559.2 330,479.5 1020,492.5 995,549"/></clipPath><g clip-path="url(#cpl)">
<polygon points="124,559.2 995,549 997.5,543.4 144.6,551.2" fill="url(#pl0)"/>
<polygon points="144.6,551.2 997.5,543.4 1000,537.7 165.2,543.3" fill="url(#pl1)"/>
<polygon points="165.2,543.3 1000,537.7 1002.5,532 185.8,535.3" fill="url(#pl0)"/>
<polygon points="185.8,535.3 1002.5,532 1005,526.4 206.4,527.3" fill="url(#pl1)"/>
<polygon points="206.4,527.3 1005,526.4 1007.5,520.8 227,519.4" fill="url(#pl0)"/>
<polygon points="227,519.4 1007.5,520.8 1010,515.1 247.6,511.4" fill="url(#pl1)"/>
<polygon points="247.6,511.4 1010,515.1 1012.5,509.4 268.2,503.4" fill="url(#pl0)"/>
<polygon points="268.2,503.4 1012.5,509.4 1015,503.8 288.8,495.4" fill="url(#pl1)"/>
<polygon points="288.8,495.4 1015,503.8 1017.5,498.1 309.4,487.5" fill="url(#pl0)"/>
<polygon points="309.4,487.5 1017.5,498.1 1020,492.5 330,479.5" fill="url(#pl1)"/>
<path d="M124 558.4L995 548.2M144.6 550.4L997.5 542.6M165.2 542.5L1000 536.9M185.8 534.5L1002.5 531.2M206.4 526.5L1005 525.6M227 518.6L1007.5 520M247.6 510.6L1010 514.3M268.2 502.6L1012.5 508.6M288.8 494.6L1015 503M309.4 486.7L1017.5 497.3" stroke="#5f3d2e" stroke-width="1.600" fill="none" opacity="0.850"/>
<path d="M124 556.8L995 546.6M144.6 548.8L997.5 541M165.2 540.9L1000 535.3M185.8 532.9L1002.5 529.6M206.4 524.9L1005 524M227 517L1007.5 518.4M247.6 509L1010 512.7M268.2 501L1012.5 507.1M288.8 493L1015 501.4M309.4 485.1L1017.5 495.8" stroke="#8a6555" stroke-width="1.400" fill="none" opacity="0.500"/>
</g>
<polygon points="118.3,553.3 330,479.5 124,559.2" fill="#8a5645"/>
<line x1="124" y1="559.2" x2="330" y2="479.5" stroke="#c58a72" stroke-width="0.9"/>
<line x1="118.3" y1="553.3" x2="330" y2="479.5" stroke="#a56752" stroke-width="0.8"/>
<polygon points="118.3,553.3 124,559.2 124,566.3 119,559.5" fill="#6a4431"/>
<polygon points="124,559.2 995,548.6 995,554.6 124,566" fill="#5c4939"/>
<line x1="124" y1="559.2" x2="995" y2="548.6" stroke="#c08a78" stroke-width="0.9"/>
<line x1="124" y1="566.3" x2="995" y2="554.9" stroke="#b08a86" stroke-width="0.9" opacity="0.900"/>
<polygon points="1020,492.5 1511.7,476.3 1596,562.3 995,549" fill="#986c57"/>
<clipPath id="cpr"><polygon points="995,549 1020,492.5 1511.7,476.3 1596,562.3"/></clipPath><g clip-path="url(#cpr)">
<polygon points="995,549 1596,562.3 1587.6,553.7 997.5,543.4" fill="url(#pr0)"/>
<polygon points="997.5,543.4 1587.6,553.7 1579.1,545.1 1000,537.7" fill="url(#pr1)"/>
<polygon points="1000,537.7 1579.1,545.1 1570.7,536.5 1002.5,532" fill="url(#pr0)"/>
<polygon points="1002.5,532 1570.7,536.5 1562.3,527.9 1005,526.4" fill="url(#pr1)"/>
<polygon points="1005,526.4 1562.3,527.9 1553.8,519.3 1007.5,520.8" fill="url(#pr0)"/>
<polygon points="1007.5,520.8 1553.8,519.3 1545.4,510.7 1010,515.1" fill="url(#pr1)"/>
<polygon points="1010,515.1 1545.4,510.7 1537,502.1 1012.5,509.4" fill="url(#pr0)"/>
<polygon points="1012.5,509.4 1537,502.1 1528.6,493.5 1015,503.8" fill="url(#pr1)"/>
<polygon points="1015,503.8 1528.6,493.5 1520.1,484.9 1017.5,498.1" fill="url(#pr0)"/>
<polygon points="1017.5,498.1 1520.1,484.9 1511.7,476.3 1020,492.5" fill="url(#pr1)"/>
<path d="M995 548.2L1596 561.5M997.5 542.6L1587.6 552.9M1000 536.9L1579.1 544.3M1002.5 531.2L1570.7 535.7M1005 525.6L1562.3 527.1M1007.5 520L1553.8 518.5M1010 514.3L1545.4 509.9M1012.5 508.6L1537 501.3M1015 503L1528.6 492.7M1017.5 497.3L1520.1 484.1" stroke="#7a5542" stroke-width="1.600" fill="none" opacity="0.850"/>
<path d="M995 546.6L1596 559.9M997.5 541L1587.6 551.3M1000 535.3L1579.1 542.7M1002.5 529.6L1570.7 534.1M1005 524L1562.3 525.5M1007.5 518.4L1553.8 516.9M1010 512.7L1545.4 508.3M1012.5 507.1L1537 499.7M1015 501.4L1528.6 491.1M1017.5 495.8L1520.1 482.5" stroke="#a58070" stroke-width="1.400" fill="none" opacity="0.500"/>
</g>
<polygon points="1511.7,476.3 1795,556 1596,562.3" fill="#76594a"/>
<clipPath id="cph"><polygon points="1596,562.3 1511.7,476.3 1511.7,476.3 1795,556"/></clipPath><g clip-path="url(#cph)">
<polygon points="1596,562.3 1795,556 1766.7,548 1587.6,553.7" fill="url(#ph0)"/>
<polygon points="1587.6,553.7 1766.7,548 1738.3,540.1 1579.1,545.1" fill="url(#ph1)"/>
<polygon points="1579.1,545.1 1738.3,540.1 1710,532.1 1570.7,536.5" fill="url(#ph0)"/>
<polygon points="1570.7,536.5 1710,532.1 1681.7,524.1 1562.3,527.9" fill="url(#ph1)"/>
<polygon points="1562.3,527.9 1681.7,524.1 1653.3,516.1 1553.8,519.3" fill="url(#ph0)"/>
<polygon points="1553.8,519.3 1653.3,516.1 1625,508.2 1545.4,510.7" fill="url(#ph1)"/>
<polygon points="1545.4,510.7 1625,508.2 1596.7,500.2 1537,502.1" fill="url(#ph0)"/>
<polygon points="1537,502.1 1596.7,500.2 1568.4,492.2 1528.6,493.5" fill="url(#ph1)"/>
<polygon points="1528.6,493.5 1568.4,492.2 1540,484.3 1520.1,484.9" fill="url(#ph0)"/>
<polygon points="1520.1,484.9 1540,484.3 1511.7,476.3 1511.7,476.3" fill="url(#ph1)"/>
<path d="M1596 561.5L1795 555.2M1587.6 552.9L1766.7 547.2M1579.1 544.3L1738.3 539.3M1570.7 535.7L1710 531.3M1562.3 527.1L1681.7 523.3M1553.8 518.5L1653.3 515.4M1545.4 509.9L1625 507.4M1537 501.3L1596.7 499.4M1528.6 492.7L1568.4 491.4M1520.1 484.1L1540 483.5" stroke="#5f4132" stroke-width="1.600" fill="none" opacity="0.850"/>
<path d="M1596 559.9L1795 553.6M1587.6 551.3L1766.7 545.6M1579.1 542.7L1738.3 537.7M1570.7 534.1L1710 529.7M1562.3 525.5L1681.7 521.7M1553.8 516.9L1653.3 513.8M1545.4 508.3L1625 505.8M1537 499.7L1596.7 497.8M1528.6 491.1L1568.4 489.8M1520.1 482.5L1540 481.9" stroke="#836454" stroke-width="1.400" fill="none" opacity="0.500"/>
</g>
<line x1="1511.7" y1="476.3" x2="1596" y2="562.3" stroke="#d09a80" stroke-width="0.9"/>
<line x1="1511.7" y1="476.3" x2="1795" y2="556" stroke="#8a5a48" stroke-width="0.8"/>
<line x1="1020" y1="492.5" x2="995" y2="549" stroke="#d9a08c" stroke-width="0.9"/>
<line x1="330" y1="479.5" x2="1020" y2="492.5" stroke="#b07a68" stroke-width="0.7"/>
<line x1="1020" y1="492.5" x2="1511.7" y2="476.3" stroke="#c08a76" stroke-width="0.7"/>
<polygon points="995,549 1596,562.5 1597.5,569.5 995,555" fill="#937e61"/>
<line x1="995" y1="549" x2="1596" y2="562.5" stroke="#cf8f7c" stroke-width="0.9"/>
<polygon points="1596,562.5 1795,556 1795,562.5 1597.5,569.5" fill="#6a4a33"/>
<line x1="1596" y1="562.5" x2="1795" y2="556" stroke="#c9957c" stroke-width="0.9"/>
<line x1="983.5" y1="555" x2="983.5" y2="594" stroke="#1a1a1a" stroke-width="1.6"/>
<line x1="963" y1="575" x2="1003" y2="575" stroke="#1a1a1a" stroke-width="1.6"/>
<g stroke="#111" stroke-width="1.500" fill="none" stroke-linecap="butt"><path d="M675 855 V916.600 L733.400 905.300 M675 916.600 L700.300 934"/></g>
<g font-family="Liberation Sans, sans-serif" font-size="10" fill="#111"><text x="674" y="848">z</text><text x="738" y="904">y</text><text x="705" y="937">x</text></g>
<rect x="967" y="162" width="32" height="15" fill="#eef1f3"/><line x1="969" y1="170.500" x2="997" y2="170.500" stroke="#f0a060" stroke-width="1" stroke-dasharray="5 2.500"/>
<rect x="967" y="972" width="32" height="15" fill="#dfe3e6"/><line x1="969" y1="980.500" x2="997" y2="980.500" stroke="#f0a060" stroke-width="1" stroke-dasharray="5 2.500"/>
<rect x="48" y="559" width="15" height="32" fill="#dfe3e6"/><line x1="56.500" y1="561" x2="56.500" y2="589" stroke="#f0a060" stroke-width="1" stroke-dasharray="5 2.500"/>
<rect x="1903" y="559" width="15" height="32" fill="#dfe3e6"/><line x1="1911.500" y1="561" x2="1911.500" y2="589" stroke="#f0a060" stroke-width="1" stroke-dasharray="5 2.500"/>
</svg></div>
<div id="titlebar"></div>
<svg class="a" style="left:2px;top:3px" width="18" height="17" viewBox="0 0 18 17"><rect x="0" y="0" width="17" height="17" fill="#eaf3f9"/><path d="M2 16 L6 2 L12 2 L9 16 Z" fill="#1aa7d8"/><path d="M6 2 L12 2 L16 16 L11 16 C11 10 9 5 6 2Z" fill="#35c3ea"/><path d="M2 16 L6 2 L7.2 2 L4 16Z" fill="#0b7fb3"/></svg>
<span class="t" style="left:24px;top:4px;font-size:12px;line-height:16px;color:#000;letter-spacing:-0.434px;">APARTMNT D1 MTHOMBENI - GRAPHISOFT ARCHICAD-64 22</span>
<svg class="a" style="left:1780px;top:0" width="140" height="22" viewBox="0 0 140 22" fill="none" stroke="#111" stroke-width="1"><path d="M19 11.5 H29"/><rect x="64.500" y="7.500" width="7" height="7" rx="1.500"/><path d="M66.500 7.500 V6.500 Q66.500 5.500 67.500 5.500 H72.500 Q73.500 5.500 73.500 6.500 V11.500 Q73.500 12.500 72.500 12.500 H71.500"/><path d="M109.500 5.500 L119.500 15.500 M119.500 5.500 L109.500 15.500"/></svg>
<div id="menubar"></div>
<span class="t" style="left:8px;top:25px;font-size:12px;line-height:16px;color:#000;letter-spacing:-0.445px;">File</span>
<span class="t" style="left:39px;top:25px;font-size:12px;line-height:16px;color:#000;letter-spacing:-0.226px;">Edit</span>
<span class="t" style="left:73px;top:25px;font-size:12px;line-height:16px;color:#000;letter-spacing:-0.264px;">View</span>
<span class="t" style="left:112px;top:25px;font-size:12px;line-height:16px;color:#000;letter-spacing:-0.270px;">Design</span>
<span class="t" style="left:162px;top:25px;font-size:12px;line-height:16px;color:#000;letter-spacing:0.187px;">Document</span>
<span class="t" style="left:232px;top:25px;font-size:12px;line-height:16px;color:#000;letter-spacing:0.108px;">Options</span>
<span class="t" style="left:288px;top:25px;font-size:12px;line-height:16px;color:#000;letter-spacing:0.046px;">Teamwork</span>
<span class="t" style="left:357px;top:25px;font-size:12px;line-height:16px;color:#000;letter-spacing:0.264px;">Window</span>
<span class="t" style="left:415px;top:25px;font-size:12px;line-height:16px;color:#000;letter-spacing:-0.269px;">Bramac</span>
<span class="t" style="left:469px;top:25px;font-size:12px;line-height:16px;color:#000;letter-spacing:-0.192px;">LiveSync®</span>
<span class="t" style="left:540px;top:25px;font-size:12px;line-height:16px;color:#000;letter-spacing:-0.203px;">Terran</span>
<span class="t" style="left:587px;top:25px;font-size:12px;line-height:16px;color:#000;letter-spacing:0.105px;">Tondach</span>
<span class="t" style="left:647px;top:25px;font-size:12px;line-height:16px;color:#000;letter-spacing:-0.216px;">Leier Termékek</span>
<span class="t" style="left:740px;top:25px;font-size:12px;line-height:16px;color:#000;letter-spacing:0.107px;">Help</span>
<svg class="a" style="left:1876px;top:25px" width="44" height="14" viewBox="0 0 44 14" fill="none" stroke="#111" stroke-width="1.200"><path d="M4 7 H11"/><rect x="17.500" y="4.500" width="5" height="5" rx="1" stroke-width="1.500"/><path d="M19.500 3.500 H24 V8" stroke-width="1.200"/><path d="M31.500 3.500 L38.500 10.500 M38.500 3.500 L31.500 10.500"/></svg>
<div id="toolbar"></div>
<svg class="a" style="left:0;top:41px" width="960" height="37" viewBox="0 41 960 37" fill="none" stroke-linecap="round" stroke-linejoin="round">
<rect x="148" y="44.500" width="92" height="30" fill="#cce4f7"/>
<path d="M178.500 44.500 V74.500 M194 44.500 V74.500 M224.500 44.500 V74.500" stroke="#a9cdec" stroke-width="1"/>
<rect x="474" y="44.500" width="25" height="30" rx="2" fill="#cce4f7"/>
<path d="M4.500 53 V67" stroke="#777" stroke-width="1"/>
<path d="M59.500 46 V74 M142.500 46 V74 M551.500 46 V74 M734.500 46 V74" stroke="#555" stroke-width="1"/>
<path d="M12 61 A7 7 0 1 1 19 66.500 M11 54.500 V61.500 H18" stroke="#222" stroke-width="1.400"/>
<path d="M51 61 A7 7 0 1 0 44 66.500 M52 54.500 V61.500 H45" stroke="#b4b4b4" stroke-width="1.400"/>
<circle cx="74.500" cy="57.500" r="4.800" stroke="#3a6fd0" stroke-width="1.200"/><circle cx="74.500" cy="57.500" r="2.600" fill="#1d2d1d" stroke="none"/>
<path d="M78 61 L84.500 67.500" stroke="#3a6fd0" stroke-width="1.200"/>
<path d="M84.500 56 V63 M74 64 V67.500 H80" stroke="#222" stroke-width="1.300"/><circle cx="84.500" cy="55.500" r="1.300" fill="#222"/><path d="M73 66 L75 68.500 L75 63.500Z" fill="#222" stroke="none"/>
<path d="M95 68 L104 58" stroke="#3a6fd0" stroke-width="3.600"/>
<path d="M103 59 L109.500 52.500" stroke="#222" stroke-width="3.400"/><path d="M103 59 L109.500 52.500" stroke="#f0f0f0" stroke-width="1.600"/><path d="M101.500 54 L108 61" stroke="#222" stroke-width="1.300"/>
<path d="M119 68.500 L122.500 65" stroke="#222" stroke-width="1.200"/><path d="M122.500 65.500 L129 59" stroke="#3a6fd0" stroke-width="3.400"/><path d="M128 60 L133.500 54.500 M130.500 52 L136 57.500 M127 56 L132 61" stroke="#222" stroke-width="1.300"/>
<path d="M158.500 52.500 V67.500 H173.500 Z" stroke="#222" stroke-width="1.400"/><path d="M161.500 60 V64.500 H166 Z" stroke="#222" stroke-width="1.100"/><path d="M156.500 69.500 H174" stroke="#e9a36b" stroke-width="1" stroke-dasharray="1.500 1"/><path d="M156.500 66 V69.500" stroke="#e9a36b" stroke-width="1"/>
<path d="M182.500 58.500 H190.500 L186.500 62.500Z" fill="#222" stroke="none"/>
<path d="M203 60.500 H209 M213 60.500 H219 M211 57.500 V63.500 M212.500 57 L214.500 59 L218.500 53.500" stroke="#222" stroke-width="1.200"/><path d="M203 66.500 H219" stroke="#3a6fd0" stroke-width="1.100" stroke-dasharray="2.500 1.500"/>
<path d="M228.500 58.500 H236.500 L232.500 62.500Z" fill="#222" stroke="none"/>
<path d="M248.500 52.500 L253 57 L250.500 57 L248.500 59 Z" fill="#999" stroke="none"/><rect x="248.500" y="60" width="11.500" height="7" stroke="#b4b4b4" stroke-width="1"/><path d="M263 62 H264.500 M263 66 H264.500" stroke="#b4b4b4" stroke-width="1"/>
<path d="M251 61.500 L254 65.500 M254 61.500 L251 65.500 M255.500 61.500 L257 63.500 L258.500 61.500 M257 63.500 V65.500" stroke="#aaa" stroke-width="0.800"/>
<path d="M274.500 58.500 H282.500 L278.500 62.500Z" fill="#8a8a8a" stroke="none"/>
<path d="M294 56.500 H310 M294 63.500 H310 M298.500 52.500 V68 M305.500 52.500 V68" stroke="#222" stroke-width="1.100" stroke-dasharray="2 1.200"/>
<g fill="#222" stroke="none"><rect x="297" y="55" width="3" height="3"/><rect x="304" y="55" width="3" height="3"/><rect x="297" y="62" width="3" height="3"/><rect x="304" y="62" width="3" height="3"/></g>
<path d="M320.500 58.500 H328.500 L324.500 62.500Z" fill="#222" stroke="none"/>
<path d="M336 57 L347 57 L352.500 64.500 L342 64.500 Z M339.500 59.500 H349 M341 62 H351 M341.500 57 L347 64.500" stroke="#b9cdea" stroke-width="1" fill="#dfe8f5"/>
<path d="M366.500 52 L372.500 57.500 V68 L366.500 62.500 Z M369.500 54.700 V65.300 M366.500 57.200 L372.500 62.800" stroke="#3a6fd0" stroke-width="1.300"/>
<rect x="392.500" y="54.500" width="13.500" height="13.500" stroke="#c4c8d2" stroke-width="1"/><rect x="389.500" y="51.500" width="13.500" height="13.500" stroke="#b4b4b4" stroke-width="1.100" fill="#f0f0f0"/><rect x="392" y="54" width="8.500" height="8.500" stroke="#d0d0d0" stroke-width="1"/>
<path d="M416.500 58.500 H424.500 L420.500 62.500Z" fill="#8a8a8a" stroke="none"/>
<path d="M439 60.500 V58 Q437 56 437 54.500 Q437 51.500 443.500 51.500 Q450 51.500 450 54.500 Q450 56 448 58 V60.500 M438 60.500 H449 V68 H438 Z" stroke="#b4b4b4" stroke-width="1.200"/>
<path d="M462.500 58.500 H470.500 L466.500 62.500Z" fill="#8a8a8a" stroke="none"/>
<path d="M479.500 57 L482 52.500 L494 57 L491 61.500 Z" stroke="#222" stroke-width="1.200"/><g fill="#fff" stroke="#222" stroke-width="1.100"><rect x="480.500" y="51.500" width="3" height="3"/><rect x="491.500" y="55.500" width="3" height="3"/><rect x="478.500" y="57.500" width="3" height="3"/></g>
<path d="M478.500 65.500 H487 V68.500 H478.500 Z M480 68 L483 65.800" stroke="#222" stroke-width="1.200"/><rect x="489" y="60.500" width="5.500" height="6" fill="#3a6fd0" stroke="none"/><path d="M486.500 61 L488 62 M486.500 66 L488 65 M495.500 61.500 L497 60.500 M495.500 65.500 L497 66.500 M491.500 68 V69.500" stroke="#3a6fd0" stroke-width="0.900"/>
<path d="M502.500 53.500 H520 M502.500 53.500 V66.500 H520 M506 54 V56.500 M509 54 V55.500 M512 54 V56.500 M515 54 V55.500 M518 54 V56.500" stroke="#b4b4b4" stroke-width="1.100"/><path d="M507 60.500 L508.500 59 V64.500 M513 60 Q515.500 58 516 60.500 L513 64.500 H516.500" stroke="#b4b4b4" stroke-width="1"/>
<circle cx="536" cy="60.500" r="2.800" stroke="#b4b4b4" stroke-width="1.100"/><path d="M530.500 54.500 L533.500 58 M541.500 54.500 L538.500 58 M530.500 66.500 L533.500 63 M541.500 66.500 L538.500 63" stroke="#b4b4b4" stroke-width="1.100"/>
<path d="M561.500 51 V56.500" stroke="#3a6fd0" stroke-width="1.100"/><path d="M561.500 62.500 V68.500" stroke="#222" stroke-width="1.200"/><path d="M562.500 58 L572.500 64 M562.500 66 L572.500 59.500" stroke="#222" stroke-width="1.300"/><circle cx="575" cy="58" r="2.200" stroke="#222" stroke-width="1.200"/><circle cx="575" cy="65" r="2.200" stroke="#222" stroke-width="1.200"/>
<path d="M594 60.500 L602 67" stroke="#222" stroke-width="2.200"/><path d="M589.500 53.500 Q592 52 594 54 L596 53 L598.500 56.500 L596 58.500 L595 57.500 Q594 61 590.500 63.500 Q587 63.500 585.500 60 Q588.500 60 589 58 L587.500 56 Z" stroke="#222" stroke-width="1.300"/>
<path d="M610 52.500 H627" stroke="#a9c0e6" stroke-width="1"/><path d="M618.500 55 V65 M615.500 58 L618.500 54.500 L621.500 58 M614 62 V68 M617 63.500 V68 M620.500 63.500 V68 M623.500 62 V68" stroke="#b4b4b4" stroke-width="1.100"/>
<path d="M638 67.500 V53.500 H651 M649 51.500 V56 M635.500 64.500 H640.500" stroke="#b4b4b4" stroke-width="1.200"/>
<path d="M663 67.500 Q663 54 675 53 M674 51 V55.500 M660.500 65 H665.500 M664 62 Q666 56 672 55.500" stroke="#b4b4b4" stroke-width="1.100"/>
<rect x="686.500" y="52.500" width="15" height="15" stroke="#b4b4b4" stroke-width="1"/><path d="M686.500 59 H695 V67.500 M691 57.500 V54.500 M689.500 56 L691 54.500 L692.500 56 M696.500 63.500 H700 M698.500 62 L700 63.500 L698.500 65" stroke="#b4b4b4" stroke-width="0.900"/>
<rect x="714.500" y="51.500" width="9" height="6" stroke="#d4d4d4" stroke-width="0.800"/><path d="M711 62 L718.500 55 L726 62 M713.500 60.500 V68 H723.500 V60.500" stroke="#b4b4b4" stroke-width="1.400"/>
<path d="M745 58.500 V67.500 H754" stroke="#999" stroke-width="1"/><g fill="#f0f0f0" stroke="#999" stroke-width="0.900"><rect x="743.500" y="56.500" width="2.500" height="2.500"/><rect x="743.500" y="66" width="2.500" height="2.500"/><rect x="753" y="66" width="2.500" height="2.500"/></g>
<rect x="749.500" y="53" width="9.500" height="9.500" stroke="#222" stroke-width="1.300"/><g fill="#f0f0f0" stroke="#222" stroke-width="1.200"><rect x="748" y="51.500" width="3" height="3"/><rect x="757.500" y="51.500" width="3" height="3"/><rect x="748" y="61" width="3" height="3"/><rect x="757.500" y="61" width="3" height="3"/></g><circle cx="754.500" cy="57.500" r="1" stroke="#aaa" stroke-width="0.700"/>
<ellipse cx="777" cy="63.500" rx="7.500" ry="3" stroke="#3a6fd0" stroke-width="1.200"/><path d="M770 59.500 H776" stroke="#3a6fd0" stroke-width="1.100"/><path d="M774.500 63.500 L776 60.500 L783.500 53 L785.500 55 L778 62.500 Z" stroke="#222" stroke-width="1.200" fill="#f0f0f0"/>
<path d="M799.500 65.500 Q794 65.500 794 60.500 Q794 56.500 798 56 Q799 52 803 52 Q807 52 808 55.500 Q810.500 56 810.500 58.500" stroke="#222" stroke-width="1.200"/><rect x="802" y="60.500" width="9" height="7.500" rx="0.800" fill="#3a6fd0" stroke="none"/><path d="M804 63.500 H805 M806.500 63.500 H809.500 M804 65.800 H805 M806.500 65.800 H809.500" stroke="#fff" stroke-width="0.900"/>
<path d="M822.500 58.500 L826 55 H832 V65.500 H822.500 Z" stroke="#222" stroke-width="1.400"/><path d="M826.500 57.500 L833.500 52 L839 61.500 L832 67 Z M829 58.500 L833.500 55 L836.500 60.500" stroke="#3a6fd0" stroke-width="1.300"/><path d="M829 58.500 L836.500 60.500 L832.500 64 Z" fill="#d9dde6" stroke="none"/>
<path d="M849.500 58.500 H857.500 L853.500 62.500Z" fill="#222" stroke="none"/>
</svg>
<div id="infobox"></div>
<span class="t" style="left:9px;top:81px;font-size:9px;line-height:13px;color:#222;letter-spacing:-0.002px;">Main:</span>
<svg class="a" style="left:0;top:78px" width="240" height="60" viewBox="0 78 240 60" fill="none" stroke-linecap="round" stroke-linejoin="round">
<path d="M4.500 97 V118.500" stroke="#777" stroke-width="1"/>
<rect x="10.5" y="112.5" width="39" height="17" rx="3" fill="#fbfbfb" stroke="#e0e0e0" stroke-width="1"/>
<rect x="52.5" y="112.5" width="39" height="17" rx="3" fill="#fbfbfb" stroke="#e0e0e0" stroke-width="1"/>
<rect x="94.5" y="112.5" width="39" height="17" rx="3" fill="#cce4f7" stroke="#1f5f99" stroke-width="1"/>
<rect x="137" y="102.5" width="46" height="27" rx="3" fill="#fbfbfb" stroke="#e0e0e0" stroke-width="1"/>
<rect x="22.500" y="115.500" width="10" height="6.500" stroke="#222" stroke-width="1.200" stroke-dasharray="2.500 1.500"/><path d="M18.500 125.500 V119.500 L22 121.500 L29 119.500" stroke="#222" stroke-width="1.100"/><g fill="#222" stroke="none"><rect x="17" y="118" width="3" height="3"/><rect x="17" y="124" width="3" height="3"/><rect x="27.500" y="118" width="3" height="3"/></g>
<path d="M42.500 117.500 L46.500 120.500 L42.500 123.500Z" fill="#222" stroke="none"/>
<rect x="59.500" y="115.500" width="13" height="9.500" stroke="#222" stroke-width="1.300" stroke-dasharray="2.500 1.500"/><path d="M72.500 115 L77.500 118.500 L75.300 118.900 L76.500 121.300 L75.300 121.800 L74.200 119.500 L72.500 121 Z" fill="#222" stroke="none"/>
<path d="M84.500 117.500 L88.500 120.500 L84.500 123.500Z" fill="#222" stroke="none"/>
<path d="M109.500 122 L114 126.500 Q118 129 120.500 125.500 Q123 122.500 120 119.500 L115.500 115.500" stroke="#1d2b4a" stroke-width="1.500"/><path d="M112.500 119.500 L116 123 Q117.300 124 118.300 122.800 Q119.300 121.600 118 120.500 L114.500 117" stroke="#1d2b4a" stroke-width="1.400"/><circle cx="114.500" cy="115.500" r="1.800" fill="#1d2b4a" stroke="none"/><path d="M108 120.500 L111 123.500" stroke="#8a8a8a" stroke-width="2.400"/>
<path d="M152.500 109 V121.500 L155.500 119 L157.500 123.300 L159.300 122.500 L157.300 118.300 L161 118 Z" fill="#8c8c8c" stroke="#333" stroke-width="0.900"/>
<path d="M176.500 112.500 L180 115.500 L176.500 118.500Z" fill="#222" stroke="none"/>
</svg>
<div id="tabbar"></div>
<div class="a" style="left:567px;top:138px;width:260px;height:23px;background:#fff"></div>
<div class="a" style="left:1870px;top:138px;width:50px;height:22px;background:#ebebeb"></div>
<svg class="a" style="left:47px;top:138px" width="1873" height="23" viewBox="47 138 1873 23" fill="none" stroke-linejoin="round">
<path d="M306.500 138 V160 M567 138 V160 M827 138 V160 M1086.500 138 V160 M1346.500 138 V160" stroke="#c6c6c6" stroke-width="1"/>
<path d="M51.500 142.500 H57.500 V147.500 H68.500 V156.500 H51.500 Z" stroke="#222" stroke-width="1.300" fill="#fff"/><path d="M54 142.500 L53 145.500" stroke="#222" stroke-width="0.900"/>
<rect x="314.500" y="142.500" width="12" height="14.500" rx="1" stroke="#222" stroke-width="1.300" fill="#fff"/><path d="M318.500 142.500 V157 M322.500 142.500 V157 M314.500 147.500 H326.500 M314.500 152.500 H326.500" stroke="#222" stroke-width="1.100"/>
<path d="M572.500 144 L583.500 142.500 V157.500 L572.500 156 Z M583.500 142.500 L586.500 144.500 V155.500 L583.500 157.500" stroke="#222" stroke-width="1.200" fill="#fff"/>
<path d="M811 147 L817 153 M817 147 L811 153" stroke="#222" stroke-width="1.400"/>
<path d="M833 156.500 V149 L841 143.500 L849 149 V156.500 Z" stroke="#222" stroke-width="1.300" fill="#fff"/>
<rect x="1091.500" y="144.500" width="16.500" height="11.500" rx="1" fill="#8d8f92" stroke="#666" stroke-width="1"/><path d="M1102.500 152.500 H1106.500 M1102.500 154.500 H1106.500" stroke="#fff" stroke-width="1"/>
<path d="M1877.500 146 V155.500 H1882 M1877.500 149 H1880.500 M1877.500 152.500 H1880.500" stroke="#3a6fd0" stroke-width="1.200"/><path d="M1882.500 155.500 V150 L1889.500 145 L1901 151 V155.500 Z M1889.500 145 L1894 155.500" stroke="#3a6fd0" stroke-width="1.200"/>
<path d="M1909.500 148.500 H1916.500 L1913 152Z" fill="#222"/>
</svg>
<span class="t" style="left:72px;top:142px;font-size:12px;line-height:16px;color:#111;letter-spacing:-0.669px;">[1. Story]</span>
<span class="t" style="left:331px;top:142px;font-size:12px;line-height:16px;color:#111;letter-spacing:-0.380px;">[IES-04 Window Schedule]</span>
<span class="t" style="left:591px;top:142px;font-size:12px;line-height:16px;color:#111;letter-spacing:-0.187px;">[3D / All]</span>
<span class="t" style="left:851px;top:142px;font-size:12px;line-height:16px;color:#111;letter-spacing:-0.233px;">[South Elevation]</span>
<span class="t" style="left:1111px;top:142px;font-size:12px;line-height:16px;color:#111;letter-spacing:-0.569px;">[A1 Landscape]</span>
<div id="toolbox"></div>
<div class="a" style="left:0;top:149px;width:46px;height:27px;background:#cce4f7;border-radius:2px"></div>
<div class="a" style="left:0;top:212px;width:46px;height:18px;background:#dadada;border-radius:3px"></div>
<div class="a" style="left:0;top:718px;width:46px;height:18px;background:#dadada;border-radius:3px"></div>
<span class="t" style="left:2px;top:213px;font-size:12px;line-height:16px;color:#111;letter-spacing:-0.270px;">Design</span>
<span class="t" style="left:2px;top:719px;font-size:12px;line-height:16px;color:#111;letter-spacing:-0.537px;">Docume</span>
<svg class="a" style="left:0;top:138px" width="46" height="851" viewBox="0 138 46 851" fill="none" stroke="#333" stroke-width="1.200" stroke-linejoin="round" stroke-linecap="round">
<path d="M15 144.500 H32" stroke="#888" stroke-width="1"/>
<path d="M18.500 153.500 V166.500 L21.800 164 L24 168.600 L26 167.700 L23.800 163.200 L27.800 162.800 Z" fill="#8c8c8c" stroke="#333" stroke-width="0.900"/>
<rect x="14.500" y="185.500" width="18" height="13.500" stroke-dasharray="3 2" stroke-width="1.300"/>
<path d="M14.500 243 L32.500 240 V251.500 L14.500 256.500 Z" fill="#f7f7f7"/>
<path d="M18.500 270.500 L28.500 268.500 V285.500 L18.500 288 Z" fill="#f7f7f7"/><path d="M21 278.500 L23 277.800"/>
<path d="M16.500 301.500 L29.500 299.500 V313.500 L16.500 315.500 Z M23 300.500 V314.500 M16.500 308.500 L29.500 306.500" fill="#f7f7f7"/>
<path d="M19.500 331.500 V346 Q23 348 26.500 346 V331.500 Q23 329.500 19.500 331.500 Q23 333.500 26.500 331.500" fill="#f7f7f7"/>
<path d="M12.500 361.500 L33 369.500 V374 L29.500 372.500 L12.500 365.500 Z M33 369.500 L33 374" fill="#f7f7f7"/>
<path d="M10.500 398 L15 395.500 L16.500 396.500 L22.500 390.500 L35.500 396.500 L23 404.500 Z" fill="#f7f7f7"/>
<path d="M11.500 421.500 L19.500 419.500 L24 423.500 L16.500 425.500 Z M16.500 425.500 L24 423.500 L24 426.500 L29 425.300 L29 428.500 L35 431.500 L25 434.500 L20 431.500 L20 428.500 L16.500 428.500 Z M20 428.500 L29 425.300 M20 431.500 L29 428.500" fill="#f7f7f7" stroke-width="1"/>
<path d="M13.500 465.500 V455.500 L33.500 450.500 V458 M13.500 460 L33.500 454.500 M23.500 453 V462"/>
<path d="M9.500 487.500 L14.500 479.500 L28.500 478.500 L36 489 L28 488 L20 496.500 Z M28.500 478.500 L20 496.500" fill="#f7f7f7"/>
<path d="M10.500 515.500 Q22 519 35.500 508.500 L33 526.500 L26 521.500 L18.500 527.500 Z M26 521.500 L35.500 508.500" fill="#f7f7f7"/>
<path d="M12 543.500 L22 541 L35 549.500 L25 553.500 Z M11 551 L20 546.500 L33.500 554 L25 557.500 Z" stroke-width="1"/><path d="M11 551 Q22 552 33 548" stroke="#999"/>
<path d="M13.500 570.500 L33 568 V583 L13.500 587.500 Z M20 569.700 V586 M26.500 568.900 V584.500 M13.500 579 L33 575.500" fill="#f7f7f7"/>
<path d="M14.500 612.500 Q13.500 600.500 27 597.500 Q27 606.500 31.500 610.500 Q26.500 615 23 617.500 Q19.500 614 14.500 612.500 Z M27 597.500 Q21.500 606 23 617.500" fill="#f7f7f7"/>
<path d="M16.500 644.500 V632 Q16.500 629 19.500 628.500 Q22.500 628.500 22.500 631.500 V637.500 L31 639.500 L24 642 L16.500 639.500 M22.500 637.500 L16.500 639.500 M24 642 V648.500 M31 639.500 V645.500 M16.500 639.500 V644.500"/>
<path d="M13.500 659.500 H20.500 V664 H26 V659.500 H28.500 V665.500 H33.500 V674.500 Q31 674 28.500 676 H19.500 Q16.500 674 13.500 676 Z M21 668.500 H28 M21 671 H28" fill="#f7f7f7"/>
<path d="M7.500 692.500 Q18 692.500 25 689.500 Q32.500 695.500 36.500 699.500 Q30 702 25 705.500 Q18.500 698.500 7.500 692.500 Z M13.500 692 Q21 697.500 30.500 702.500 M19.500 691 Q25.500 696 33.500 701 M17 698 Q24 696.500 29 692.500 M21 702 Q28 699.500 33 696" stroke-width="1"/>
<g stroke="#7a7a7a"><path d="M11.500 757.500 H34.500 M14.500 754.500 V760.500 M31.500 754.500 V760.500" stroke-width="1"/></g>
<path d="M16.500 791 V779 Q16.500 776.500 19.500 776 Q22.500 776 22.500 778.500 V784.500 L31 786.500 L24 789 L16.500 786.500 M22.500 784.500 L16.500 786.500 M24 789 V795 M31 786.500 V792" stroke="#7a7a7a"/>
<path d="M15.500 823 L23 806.500 L30.500 823 M18 817.500 H28" stroke="#7a7a7a" stroke-width="1.300"/>
<path d="M20.500 841.500 L12 849.500" stroke="#7a7a7a"/><path d="M10.500 851 L11 845.500 L16 850.500 Z" fill="#7a7a7a" stroke="none"/>
<path d="M11.500 881 L17.500 867.500 H28 L25 872.500 L34 881 Z" fill="#8a8a8a" stroke="#7a7a7a" stroke-width="1"/><path d="M13.500 880 L20 868.500 M17 880.500 L24 868.500 M21 880.500 L26 873 M25.500 880.500 L28.500 876.500" stroke="#e0e0e0" stroke-width="0.900"/>
<path d="M14.500 912 L31.500 895.500" stroke="#7a7a7a"/>
<circle cx="23" cy="933.500" r="8.500" stroke="#7a7a7a"/>
<path d="M12.500 971 V962 Q13.500 957 18.500 956.500 H30.500 L25 963 M12.500 971 H33" stroke="#7a7a7a"/>
<path d="M11 986.500 H30 Q32 987 32 989" stroke="#7a7a7a"/>
</svg>
<span class="t" style="left:18px;top:748px;font-size:7px;line-height:11px;color:#777;letter-spacing:0.634px;">1.2</span>
<span class="t" style="left:21px;top:834px;font-size:13px;line-height:17px;color:#6a6a6a;letter-spacing:-0.900px;">A1</span>
<div id="quickbar"></div>
<div class="a" style="left:0;top:989px;width:46px;height:20px;background:#d2d2d2"></div>
<span class="t" style="left:2px;top:991px;font-size:12px;line-height:16px;color:#111;letter-spacing:-0.114px;">More</span>
<svg class="a" style="left:0;top:989px" width="1920" height="21" viewBox="0 989 1920 21" fill="none" stroke-linecap="round" stroke-linejoin="round">
<rect x="121" y="990" width="23" height="18" rx="2" fill="#cce4f7"/>
<path d="M118.5 990V1009M169.5 990V1009M345.5 990V1009M520.5 990V1009M696.5 990V1009M872 990V1009M1047 990V1009M1222.5 990V1009M1397.5 990V1009M1572.5 990V1009M1747.5 990V1009" stroke="#bdbdbd" stroke-width="1"/>
<circle cx="59.500" cy="998.500" r="6" stroke="#222" stroke-width="1.200"/><path d="M55.500 1003 L51.500 1007 M51.500 998.500 H58 M53.500 996 L51 998.500 L53.500 1001" stroke="#222" stroke-width="1.200"/>
<circle cx="79.500" cy="998.500" r="6" stroke="#b4b4b4" stroke-width="1.200"/><path d="M83.500 1003 L87.500 1007 M81 998.500 H88 M85.500 996 L88 998.500 L85.500 1001" stroke="#b4b4b4" stroke-width="1.200"/>
<circle cx="103.500" cy="998" r="6" stroke="#222" stroke-width="1.200"/><path d="M108 1002.500 L112 1006.500 M100.500 998 H106.500 M103.500 995 V1001" stroke="#222" stroke-width="1.200"/>
<path d="M131 1003 Q126 1002 126 998.500 Q126 995 132.500 995 Q139 995 139 998.500 Q139 1001.500 134 1002.200 M135.500 1000 L133.500 1002.300 L136 1004" stroke="#1d3a7a" stroke-width="1.200"/>
<circle cx="155.500" cy="994" r="1.400" fill="#222"/><path d="M155.500 996.500 L154.500 1001 L152.500 1004.500 M154.500 1001 L157.500 1002.500 L158 1005 M155.500 996.500 L152.500 999 M155.500 997 L158.500 999.500" stroke="#222" stroke-width="1.100"/>
<circle cx="183" cy="997.500" r="6.500" stroke="#222" stroke-width="1.200"/><path d="M188 1002.500 L191 1006" stroke="#222" stroke-width="1.300"/><g fill="#222" stroke="none"><path d="M183 993 L184.500 995 H181.500Z M183 1002 L184.500 1000 H181.500Z M178.500 997.500 L180.500 996 V999Z M187.500 997.500 L185.500 996 V999Z"/></g>
<path d="M334 995.500 L338 999 L334 1002.500Z" fill="#aaa" stroke="none"/>
<path d="M509 995.500 L513 999 L509 1002.500Z" fill="#aaa" stroke="none"/>
<path d="M685 995.500 L689 999 L685 1002.500Z" fill="#222" stroke="none"/>
<path d="M860 995.500 L864 999 L860 1002.500Z" fill="#222" stroke="none"/>
<path d="M1035 995.500 L1039 999 L1035 1002.500Z" fill="#222" stroke="none"/>
<path d="M1211 995.500 L1215 999 L1211 1002.500Z" fill="#222" stroke="none"/>
<path d="M1386 995.500 L1390 999 L1386 1002.500Z" fill="#222" stroke="none"/>
<path d="M1561 995.500 L1565 999 L1561 1002.500Z" fill="#222" stroke="none"/>
<path d="M1736 995.500 L1740 999 L1736 1002.500Z" fill="#222" stroke="none"/>
<path d="M1910 995.500 L1914 999 L1910 1002.500Z" fill="#222" stroke="none"/>
<path d="M354.500 998 L359.500 993.500 L364.500 997 L359.500 1001.500 Z M364.500 1000 Q367 1000 366 1003 M364.500 1001.500 L366 1003.500" stroke="#b4b4b4" stroke-width="1.100"/>
<rect x="528.500" y="995.500" width="14" height="6" stroke="#222" stroke-width="1.200"/><path d="M532 999 V1001 M535.500 999 V1001 M539 999 V1001" stroke="#222" stroke-width="1"/>
<path d="M705 996.500 L708 993.500 H718.500 L715.500 996.500 Z M705 1000 L708 997 M715.500 1000 L718.500 997 M705 1000 H715.500 M705 1003.500 L708 1000.500 M705 1003.500 H715.500 L718.500 1000.500" stroke="#222" stroke-width="1.100"/>
<rect x="880.500" y="994.500" width="13.500" height="9" stroke="#222" stroke-width="1.200"/><path d="M880.500 997.500 H894 M883 1003 L886.500 998 M886.500 1003 L890 998 M890 1003 L893.500 998 M882 997 L884 995 M886 997 L888 995 M890 997 L892 995" stroke="#222" stroke-width="0.900"/>
<path d="M1057.500 992.500 V999 Q1057.500 1002 1060 1002 H1062 Q1064.500 1002 1064.500 999 V992.500 M1061 1002 V1006.500" stroke="#222" stroke-width="1.100"/>
<rect x="1229.500" y="994.500" width="13.500" height="9" stroke="#222" stroke-width="1.200"/><rect x="1233" y="997.500" width="6.500" height="3" stroke="#222" stroke-width="1"/>
<path d="M1411 994.500 H1405.500 V1000.500 H1409 M1412 993 L1414 995 L1412 997 M1409.500 995 H1414" stroke="#222" stroke-width="1"/><rect x="1411.500" y="998.500" width="6.500" height="6.500" fill="#555" stroke="#222" stroke-width="1"/>
<path d="M1581 1004.500 L1586 993.500 V1004.500 Z" stroke="#999" stroke-width="1"/><path d="M1586 998 L1589.500 995 L1593 998 V1004.500 H1586 M1588.500 1004.500 V1001 H1590.500 V1004.500" stroke="#222" stroke-width="1.100"/>
<path d="M1756 997.500 L1759.500 994 H1769 L1765.500 997.500 Z M1756 997.500 V1004 H1765.500 V997.500 M1765.500 1004 L1769 1000.500 V994" stroke="#222" stroke-width="1.100"/>
</svg>
<span class="t" style="left:256px;top:992.6px;font-size:11.5px;line-height:15px;color:#999;letter-spacing:-0.085px;">N/A</span>
<span class="t" style="left:432px;top:992.6px;font-size:11.5px;line-height:15px;color:#999;letter-spacing:-0.335px;">N/A</span>
<span class="t" style="left:604.5px;top:992.6px;font-size:11.5px;line-height:15px;color:#111;letter-spacing:-0.569px;">1:100</span>
<span class="t" style="left:764px;top:992.6px;font-size:11.5px;line-height:15px;color:#111;letter-spacing:0.125px;">02 Drafting</span>
<span class="t" style="left:935px;top:992.6px;font-size:11.5px;line-height:15px;color:#111;letter-spacing:0.086px;">Entire Model</span>
<span class="t" style="left:1093.5px;top:992.6px;font-size:11.5px;line-height:15px;color:#111;letter-spacing:-0.060px;">03 Architectural 100</span>
<span class="t" style="left:1274px;top:992.6px;font-size:11.5px;line-height:15px;color:#111;letter-spacing:-0.023px;">03 Building Plans</span>
<span class="t" style="left:1460px;top:992.6px;font-size:11.5px;line-height:15px;color:#111;letter-spacing:-0.113px;">No Overrides</span>
<span class="t" style="left:1628px;top:992.6px;font-size:11.5px;line-height:15px;color:#111;letter-spacing:-0.198px;">01 Existing Plan</span>
<span class="t" style="left:1803.5px;top:992.6px;font-size:11.5px;line-height:15px;color:#111;letter-spacing:-0.119px;">Simple Shading</span>
<div id="statusbar"></div>
<span class="t" style="left:3px;top:1013.5px;font-size:12px;line-height:16px;color:#111;letter-spacing:-0.118px;">Click an Element or Draw a Selection Area. Press and Hold Ctrl+Shift to Toggle Element/Sub-Element Selection.</span>
<svg class="a" style="left:1740px;top:1010px" width="180" height="22" viewBox="1740 1010 180 22" fill="none"><path d="M1766.500 1012 V1031 M1896.500 1012 V1031" stroke="#dcdcdc" stroke-width="1"/><path d="M1747.500 1018.500 V1015.500 H1759.500 V1024" stroke="#333" stroke-width="1.200"/><rect x="1749.500" y="1018.500" width="12" height="8.500" stroke="#333" stroke-width="1.300"/><path d="M1749.500 1020.500 H1761.500" stroke="#333" stroke-width="1.200"/></svg>
<span class="t" style="left:1783px;top:1012px;font-size:13.5px;line-height:17px;color:#a2a2a2;letter-spacing:-0.418px;">GRAPHISOFT</span>
<span class="t" style="left:1869.5px;top:1012px;font-size:13px;line-height:17px;color:#b4b4b4;">ID</span>
<div id="taskbar"></div>
<div class="a" style="left:544px;top:1041px;width:218px;height:30px;border-radius:15px;background:#f4f3f1;box-shadow:0 0 0 1px #e2ddd3"></div>
<div class="a" style="left:1383px;top:1036px;width:40px;height:41px;border-radius:4px;background:#faf3ec;box-shadow:0 0 0 1px #efe4da"></div>
<svg class="a" style="left:0;top:1032px" width="1920" height="48" viewBox="0 1032 1920 48" fill="none" stroke-linecap="round" stroke-linejoin="round">
<defs><linearGradient id="gcp" x1="0" y1="0" x2="1" y2="1"><stop offset="0" stop-color="#2aa0f0"/><stop offset="0.350" stop-color="#4ad06a"/><stop offset="0.600" stop-color="#f0c030"/><stop offset="0.800" stop-color="#f06a60"/><stop offset="1" stop-color="#b060f0"/></linearGradient><linearGradient id="gff" x1="0" y1="0" x2="0" y2="1"><stop offset="0" stop-color="#ffd23a"/><stop offset="0.500" stop-color="#ff7a2a"/><stop offset="1" stop-color="#e3246a"/></linearGradient><linearGradient id="ged" x1="0" y1="0" x2="1" y2="1"><stop offset="0" stop-color="#35c0e8"/><stop offset="0.550" stop-color="#1b7fd0"/><stop offset="1" stop-color="#0f5aa8"/></linearGradient><linearGradient id="gwin" x1="0" y1="0" x2="1" y2="1"><stop offset="0" stop-color="#4cc2f5"/><stop offset="1" stop-color="#0f78d4"/></linearGradient><linearGradient id="gtv" x1="0" y1="0" x2="1" y2="1"><stop offset="0" stop-color="#e8e8e8"/><stop offset="1" stop-color="#8a8a8a"/></linearGradient></defs>
<path d="M20.500 1054 Q22 1045 30 1043.500 Q37 1045 39 1054 Q36 1052 33.500 1054 Q31 1052 29.500 1054 Q27 1052 24.500 1054 Q22.500 1052.500 20.500 1054Z" fill="#62b8e8" stroke="none"/><path d="M29.500 1053 V1061.500 Q29.500 1064 27.500 1064 Q25.500 1064 25.500 1062" stroke="#6a6a5a" stroke-width="1.500"/>
<circle cx="37.500" cy="1047" r="7" fill="#c42b1c" stroke="none"/>
<g fill="url(#gwin)" stroke="none"><rect x="507.500" y="1045.500" width="10.800" height="10.800" rx="0.800"/><rect x="519.700" y="1045.500" width="10.800" height="10.800" rx="0.800"/><rect x="507.500" y="1057.700" width="10.800" height="10.800" rx="0.800"/><rect x="519.700" y="1057.700" width="10.800" height="10.800" rx="0.800"/></g>
<circle cx="560.500" cy="1054.500" r="5.500" stroke="#1f5fae" stroke-width="1.700"/><path d="M564.500 1059 L569 1063.500" stroke="#1f5fae" stroke-width="1.900"/>
<path d="M712 1062 Q710 1050 722 1048 Q728 1042 738 1045 Q748 1043 752 1050 Q760 1054 756 1064 Q740 1070 722 1068 Q714 1067 712 1062Z" fill="#cfe6f2" stroke="none"/><path d="M727 1049 Q735 1044 744 1048 Q750 1050 750 1054 L728 1054Z" fill="#f0e6d0" stroke="none"/>
<path d="M713 1064 Q725 1058 740 1062 Q752 1060 757 1064 Q745 1071 722 1069 Q715 1068 713 1064Z" fill="#6a9a3a" stroke="none"/>
<path d="M721 1057 Q722 1051 730 1051 L744 1052 Q750 1053 751 1060 Q752 1065 746 1065 L728 1065 Q722 1064 720 1060Z" fill="#9a5a2e" stroke="none"/><path d="M748 1061 Q755 1060 757 1063 Q753 1066 747 1065Z" fill="#5a3a24" stroke="none"/><circle cx="724" cy="1055.500" r="0.800" fill="#222" stroke="none"/>
<rect x="789" y="1043" width="14" height="14" rx="1.500" fill="#fbfbfb" stroke="none"/><rect x="775.500" y="1050.500" width="17" height="16" rx="1.500" fill="#252525" stroke="none"/><rect x="781" y="1050" width="12" height="11" fill="url(#gtv)" stroke="none"/>
<path d="M821 1050 Q823 1044 829 1044 H836 Q832 1046 831 1050 L828 1060 Q826 1066 820 1066 Q816 1065 818 1059Z" fill="#3a9af0" stroke="none"/><path d="M841 1060 Q839 1066 833 1066 H826 Q830 1064 831 1060 L834 1050 Q836 1044 842 1044 Q846 1045 844 1051Z" fill="#d65ad8" stroke="none"/><path d="M823 1053 Q826 1046 832 1047 L837 1048 Q833 1050 832 1054 L830 1060 Q828 1065 823 1064 Q819 1062 821 1057Z" fill="url(#gcp)" stroke="none" opacity="0.900"/><path d="M828 1062 Q831 1058 833 1052 L836 1047 Q842 1046 843 1050 L840 1059 Q838 1064 832 1065Z" fill="#f08a6a" stroke="none" opacity="0.850"/>
<circle cx="875" cy="1055.500" r="11" fill="url(#gff)" stroke="none"/><path d="M868 1046 Q872 1043 876 1045 Q880 1041 884 1046 Q888 1052 885 1058 Q880 1050 874 1051 Q870 1048 868 1046Z" fill="#ffbd2e" stroke="none"/><circle cx="875.500" cy="1056" r="4.800" fill="#7a3ad0" stroke="none"/><path d="M869 1050 Q873 1049 876 1052 Q873 1053 872 1056 Q869 1054 869 1050Z" fill="#ff8a2a" stroke="none"/>
<rect x="872" y="1072.500" width="6" height="2.500" rx="1.200" fill="#8a857c" stroke="none"/>
<circle cx="919" cy="1055.500" r="11.500" fill="url(#ged)" stroke="none"/><path d="M908 1053 Q910 1044 920 1044 Q930 1045 930.500 1054 Q930 1059 924 1059 Q920 1058 922 1054 Q920 1050 915 1051 Q910 1052 908 1056Z" fill="#4fd0a0" stroke="none"/><path d="M922 1054 Q922 1050 918 1050 Q913 1050 913 1056 Q914 1063 922 1064 Q927 1064 930 1061 Q924 1062 921 1059 Q920 1057 922 1054Z" fill="#f2f2f2" stroke="none" opacity="0.950"/><path d="M908 1056 Q909 1051 915 1051 Q912 1054 913 1058 Q915 1065 923 1066.500 Q913 1068 909 1061 Q908 1058 908 1056Z" fill="#1464b8" stroke="none"/>
<path d="M951 1046.500 Q951 1045 952.500 1045 H958 L960 1047.500 H972 Q973.500 1047.500 973.500 1049 V1052 H951Z" fill="#e5a91a" stroke="none"/><rect x="951" y="1049" width="22.500" height="16" rx="1.500" fill="#fbd04a" stroke="none"/><path d="M955.500 1065 V1060.500 Q955.500 1059 957 1059 H967.500 Q969 1059 969 1060.500 V1065Z" fill="#2a86d8" stroke="none"/>
<rect x="959.500" y="1072.500" width="6" height="2.500" rx="1.200" fill="#8a857c" stroke="none"/>
<g fill="#0a0a0a" stroke="none"><path d="M1000.500 1044 L1006 1047.500 L1000.500 1051 L995 1047.500Z M1011.500 1044 L1017 1047.500 L1011.500 1051 L1006 1047.500Z M1000.500 1051 L1006 1054.500 L1000.500 1058 L995 1054.500Z M1011.500 1051 L1017 1054.500 L1011.500 1058 L1006 1054.500Z M1006 1058.500 L1011.500 1062 L1006 1065.500 L1000.500 1062Z"/></g>
<circle cx="1049" cy="1056" r="11.500" fill="#e8453c" stroke="none"/><path d="M1049 1056 L1039.040 1061.750 A11.500 11.500 0 0 0 1049 1067.500 L1054.750 1056Z" fill="#2da94f" stroke="none"/><path d="M1039.040 1061.750 A11.500 11.500 0 0 1 1039.040 1050.250 L1049 1056Z" fill="#2da94f" stroke="none"/><path d="M1049 1067.500 A11.500 11.500 0 0 0 1058.960 1050.250 L1049 1050.250 L1054 1058Z" fill="#fcc934" stroke="none"/><circle cx="1049" cy="1056" r="5.300" fill="#f4f4f4" stroke="none"/><circle cx="1049" cy="1056" r="4.200" fill="#4a8af4" stroke="none"/>
<circle cx="1058" cy="1046.500" r="5.500" fill="#8a7a70" stroke="none"/><circle cx="1058" cy="1045" r="2.500" fill="#3a2a26" stroke="none"/><path d="M1054 1050 Q1058 1046.500 1062 1050 Q1060 1052 1058 1052 Q1056 1052 1054 1050Z" fill="#c8b8b0" stroke="none"/>
<rect x="1047" y="1072.500" width="6" height="2.500" rx="1.200" fill="#8a857c" stroke="none"/>
<rect x="1083" y="1044.500" width="23" height="23" rx="4" fill="#fefefe" stroke="none"/><g fill="#3aa63a" stroke="none"><rect x="1088" y="1060" width="2.800" height="5"/><rect x="1092.500" y="1057.500" width="2.800" height="7.500"/><rect x="1097" y="1055" width="2.800" height="10"/></g><path d="M1088 1056.500 L1093 1051.500 L1095.500 1054 L1101 1048.500 M1097.500 1048 H1101.500 V1052" stroke="#3aa63a" stroke-width="1.700"/>
<rect x="1127" y="1047.500" width="23.500" height="16.500" rx="4.500" fill="#f0102e" stroke="none"/><path d="M1135.500 1051.500 L1143 1055.800 L1135.500 1060Z" fill="#fff" stroke="none"/>
<path d="M1176 1049 L1185 1044.500 L1194 1049 V1062 Q1194 1064 1192 1064 H1178 Q1176 1064 1176 1062Z" fill="#1a74d0" stroke="none"/><path d="M1180 1047 L1190 1046 L1194 1050 L1186 1056Z" fill="#53b2f0" stroke="none"/><path d="M1176 1052 L1194 1062 Q1194 1064 1192 1064 H1178 Q1176 1064 1176 1062Z" fill="#0f5db0" stroke="none" opacity="0.700"/><rect x="1171" y="1054" width="10.500" height="10.500" rx="2" fill="#0f55a8" stroke="none"/><circle cx="1176.200" cy="1059.200" r="2.500" stroke="#fff" stroke-width="1.400"/>
<rect x="1221" y="1046" width="17" height="21" rx="1" fill="#fdfdfd" stroke="#2b579a" stroke-width="1"/><path d="M1230 1050 H1236 M1230 1053 H1236 M1230 1056 H1236 M1230 1059 H1236 M1230 1062 H1236" stroke="#2b579a" stroke-width="1.100"/><rect x="1215.500" y="1047.500" width="13.500" height="18" fill="#2b579a" stroke="none"/>
<rect x="1260" y="1045" width="21.500" height="21.500" rx="4.500" fill="#2f7adf" stroke="none"/><path d="M1260 1061 L1268.500 1052 L1277 1061 L1281.500 1057.500 V1062 Q1281.500 1066.500 1277 1066.500 H1264.500 Q1260 1066.500 1260 1062Z" fill="#7cc4f5" stroke="none"/><path d="M1260 1062 L1268.500 1053 L1274 1059.500 L1265 1066.500 Q1260 1066.500 1260 1062Z" fill="#1a5ec4" stroke="none" opacity="0.800"/><circle cx="1276" cy="1050" r="1.800" fill="#fff" stroke="none"/>
<rect x="1267.500" y="1072.500" width="6" height="2.500" rx="1.200" fill="#8a857c" stroke="none"/>
<rect x="1304" y="1045.500" width="21" height="21" rx="4" fill="#b30b00" stroke="none"/><path d="M1309 1062 Q1313 1056 1314.500 1050 Q1315 1048 1313.800 1048.200 Q1312.500 1049 1314.500 1053 Q1317 1058 1321 1059.500 Q1322.500 1059.800 1321 1058.500 Q1315 1057.500 1309 1062Z" stroke="#fff" stroke-width="1.300"/>
<rect x="1311.500" y="1072.500" width="6" height="2.500" rx="1.200" fill="#8a857c" stroke="none"/>
<rect x="1347" y="1047" width="23" height="18" rx="1" fill="#1f7fd0" stroke="none"/><path d="M1347 1058 L1351 1053 L1354 1057 L1357 1050 L1361 1057 L1364 1053 L1367 1057 L1370 1055 V1065 H1347Z" fill="#8fd0f5" stroke="none"/><path d="M1347 1062 H1370 V1065 H1347Z" fill="#d5eefa" stroke="none"/>
<rect x="1355.500" y="1072.500" width="6" height="2.500" rx="1.200" fill="#8a857c" stroke="none"/>
<rect x="1392" y="1044.500" width="21" height="21.500" fill="#f3f6f8" stroke="none"/><path d="M1393.500 1066 L1399 1045.500 L1406.500 1045.500 L1402 1066Z" fill="#1ba6d8" stroke="none"/><path d="M1399 1045.500 L1406.500 1045.500 L1412 1066 L1406 1066 Q1406 1056 1399 1045.500Z" fill="#42c8ee" stroke="none"/><path d="M1393.500 1066 L1399 1045.500 L1400.800 1045.500 L1396 1066Z" fill="#0c7db0" stroke="none"/>
<rect x="1395" y="1072.500" width="16" height="3" rx="1.500" fill="#1a73d8" stroke="none"/>
<path d="M1625.500 1058.500 L1630 1054 L1634.500 1058.500" stroke="#222" stroke-width="1.400"/>
<path d="M1654.500 1053 L1667.500 1047.500 L1662.500 1061 L1660 1055.500Z" stroke="#2a5fb8" stroke-width="1.300"/>
<path d="M1730.500 1051 Q1738 1044.500 1745.500 1051 M1733 1053.800 Q1738 1049.500 1743 1053.800 M1735.500 1056.500 Q1738 1054.500 1740.500 1056.500" stroke="#222" stroke-width="1.300"/><circle cx="1738" cy="1059" r="1.100" fill="#222" stroke="none"/>
<path d="M1754.500 1053.500 H1757 L1760.500 1050.500 V1061.500 L1757 1058.500 H1754.500Z" stroke="#222" stroke-width="1.200"/><path d="M1763 1053 Q1765 1056 1763 1059" stroke="#222" stroke-width="1.100"/><path d="M1765.500 1051 Q1768.500 1056 1765.500 1061" stroke="#aaa" stroke-width="1.100"/>
<rect x="1778.500" y="1051.500" width="16" height="9" rx="2.200" stroke="#222" stroke-width="1.200"/><rect x="1780.300" y="1053.300" width="7.500" height="5.400" rx="0.800" fill="#2f9e3f" stroke="none"/><path d="M1796 1054.500 V1057.500" stroke="#222" stroke-width="1.500"/><path d="M1788 1049.500 L1785.500 1053 H1788 L1786.500 1056" stroke="#222" stroke-width="1.100"/>
<path d="M1888 1059.500 Q1889.500 1058 1889.500 1054 Q1889.500 1050 1893.500 1050 Q1897.500 1050 1897.500 1054 Q1897.500 1058 1899 1059.500Z" fill="#222" stroke="#222" stroke-width="1"/><path d="M1892 1061.500 Q1893.500 1063 1895 1061.500" stroke="#222" stroke-width="1.200"/>
</svg>
<span class="t" style="left:35px;top:1040.5px;font-size:11px;line-height:15px;color:#fff;">1</span>
<span class="t" style="left:50px;top:1040px;font-size:12.5px;line-height:16px;color:#1a1a1a;letter-spacing:-0.047px;">Light rain</span>
<span class="t" style="left:51px;top:1056px;font-size:12.5px;line-height:16px;color:#6a6a5a;letter-spacing:0.087px;">At night</span>
<span class="t" style="left:580px;top:1047px;font-size:13.5px;line-height:17px;color:#555;letter-spacing:-0.355px;">Search</span>
<span class="t" style="left:1221.3px;top:1050.5px;font-size:9.5px;line-height:13px;color:#fff;font-weight:bold;">W</span>
<span class="t" style="left:1688px;top:1041.5px;font-size:12px;line-height:16px;color:#1a1a1a;letter-spacing:-1.002px;">ENG</span>
<span class="t" style="left:1692px;top:1057.5px;font-size:12px;line-height:16px;color:#1a1a1a;letter-spacing:-1.670px;">US</span>
<span class="t" style="left:1848px;top:1040.5px;font-size:12px;line-height:16px;color:#1a1a1a;letter-spacing:-0.507px;">20:22</span>
<span class="t" style="left:1815px;top:1056.5px;font-size:12px;line-height:16px;color:#1a1a1a;letter-spacing:0.105px;">2026/04/07</span>
<span class="t" style="left:1896.5px;top:1044px;font-size:7px;line-height:11px;color:#222;">z</span>
<span class="t" style="left:1899.5px;top:1040.5px;font-size:8px;line-height:12px;color:#222;">z</span>
</body></html>
